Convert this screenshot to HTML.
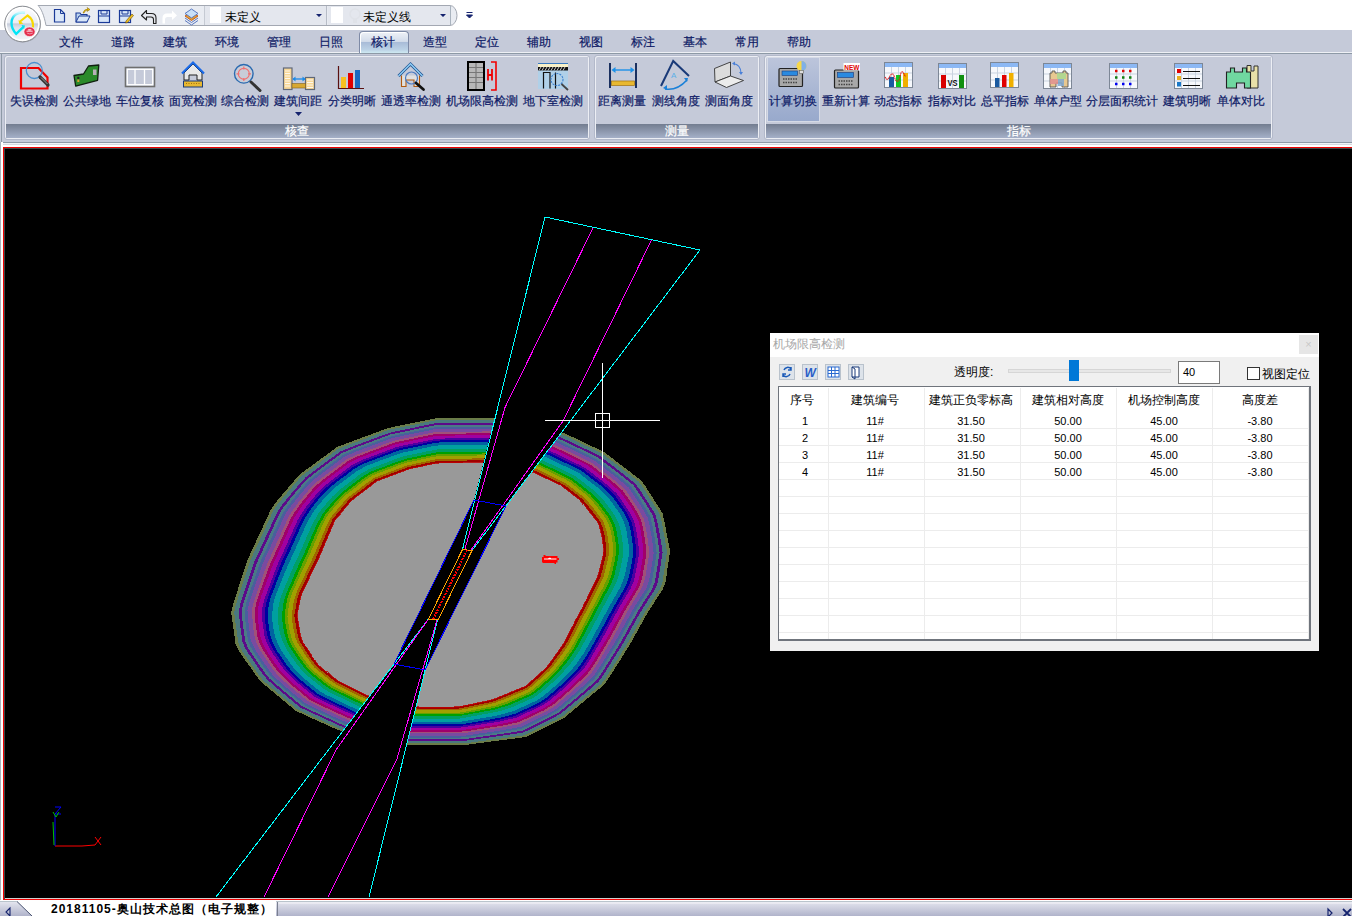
<!DOCTYPE html>
<html><head><meta charset="utf-8">
<style>
*{margin:0;padding:0;box-sizing:border-box}
html,body{width:1352px;height:916px;overflow:hidden;background:#fff;font-family:"Liberation Sans",sans-serif;font-size:12px;color:#15236e}
.a{position:absolute}
#top{left:0;top:0;width:1352px;height:30px;background:#fff}
#qat{left:36px;top:3px;width:420px;height:24px;border:1px solid #a9b0bd;border-left:none;border-radius:0 12px 12px 0;background:linear-gradient(#eef0f5,#dfe3ec)}
#menu{left:0;top:30px;width:1352px;height:22px;background:#c5cad9}
#menuline{left:0;top:52px;width:1352px;height:1px;background:#eef0f5}
#menuline2{left:0;top:53px;width:1352px;height:1px;background:#8d99a6}
#rib{left:0;top:54px;width:1352px;height:88px;background:#c5cad9}
.grp{position:absolute;top:1px;height:85px;border:1px solid #b3b9ca;border-radius:3px;background:#c5cad9;box-shadow:inset 1px 1px 0 #eceef4,inset -1px -1px 0 #eceef4}
.glab{position:absolute;left:1px;right:1px;bottom:1px;height:14px;background:linear-gradient(#737d90,#a5b0c8);color:#fff;text-align:center;font-size:12px;line-height:14px;-webkit-text-stroke:0.2px #fff}
.tx{-webkit-text-stroke:0.2px currentColor}
.btn{position:absolute;top:45px;font-size:12px;white-space:nowrap;color:#15236e;text-align:center}
.tab{position:absolute;top:35px;font-size:12px;color:#15236e}
#sep{left:0;top:142px;width:1352px;height:5px;background:linear-gradient(#8d99a6 0,#8d99a6 1px,#f0f2f6 1px,#f0f2f6 2px,#d5d9e0 2px,#d5d9e0 3px,#fff 3px)}
#canvas{left:3px;top:147px;width:1349px;height:753px;background:#000;border-top:1px solid #f00000;border-left:1px solid #f00000;border-bottom:1px solid #f00000;box-shadow:inset 1px 1px 0 #3d4848,inset 0 -1px 0 #d0d0d0}
#lstrip{left:0;top:142px;width:3px;height:760px;background:linear-gradient(90deg,#a9b2bb 0,#a9b2bb 1px,#fff 1px)}
#bot{left:0;top:900px;width:1352px;height:16px;background:linear-gradient(#fff 0,#fff 1px,#b9c4cc 1px,#b9c4cc 2px,#e3e4ee 2px,#b0b3cb 100%)}
</style></head><body>
<div id="top" class="a"></div>

<div id="menu" class="a"></div>
<div id="menuline" class="a"></div>
<div id="menuline2" class="a"></div>
<div id="rib" class="a">
 <div class="grp" style="left:4px;width:586px"><div class="glab">核查</div></div>
 <div class="grp" style="left:594px;width:166px"><div class="glab">测量</div></div>
 <div class="grp" style="left:764px;width:509px"><div class="glab">指标</div></div>
</div>
<div id="sep" class="a"></div>
<div class="a" style="left:1px;top:54px;width:1px;height:88px;background:#8d99a6"></div>
<div id="canvas" class="a"></div>
<div id="lstrip" class="a"></div>
<div id="bot" class="a"></div>
<svg class="a" style="left:0;top:900px" width="1352" height="16">
<path d="M17,1 L32,16 H276 V1z" fill="#fff"/>
<path d="M17,1.5 L32,16" stroke="#4a5470" stroke-width="1"/>
<path d="M277.5,2 V16" stroke="#7a8090" stroke-width="1"/>
<path d="M278.5,3 H1352" stroke="#f4f4f8" stroke-width="1"/>
<path d="M10,8 L6,12 L10,16z" fill="none" stroke="#15236e" stroke-width="1.1"/>
<path d="M1328,9 L1332,13 L1328,17z" fill="none" stroke="#15236e" stroke-width="1.2"/>
<path d="M1343,9 L1351,17 M1351,9 L1343,17" stroke="#15236e" stroke-width="1.8"/>
</svg>
<div class="a" style="left:51px;top:902px;font-size:12px;line-height:14px;font-weight:bold;color:#000;white-space:nowrap;letter-spacing:1px">20181105-奥山技术总图（电子规整）</div>
<svg class="a" style="left:0;top:0" width="1352" height="916" viewBox="0 0 1352 916">
<defs><clipPath id="cv"><rect x="5" y="149" width="1347" height="748"/></clipPath></defs>
<g clip-path="url(#cv)">
<g shape-rendering="crispEdges">
<polygon fill="#6a7c48" points="665.6,582.0 662.8,589.4 658.1,596.6 653.6,603.4 649.3,610.0 645.5,616.5 642.0,622.8 638.5,629.0 635.1,635.1 631.8,641.1 628.4,646.9 624.8,652.6 621.3,658.3 617.7,663.8 614.3,669.3 610.8,674.8 607.3,680.3 603.3,685.4 598.2,689.7 593.1,693.8 588.2,697.9 583.3,702.0 578.4,706.0 573.6,710.0 568.8,714.0 564.1,717.9 558.4,720.8 552.9,723.6 547.3,726.3 541.9,729.1 536.5,731.8 531.1,734.5 525.6,737.0 519.4,737.9 513.3,738.7 507.3,739.5 501.4,740.2 495.6,741.0 489.8,741.7 484.1,742.5 478.4,743.2 472.8,744.0 467.1,744.7 461.4,745.0 455.7,745.0 450.0,745.0 444.3,745.0 438.6,745.0 432.9,745.0 427.1,745.0 421.3,745.0 415.4,745.0 409.4,745.0 403.3,745.0 397.2,744.4 391.4,743.0 385.5,741.6 379.6,740.2 373.5,738.8 367.4,737.4 361.1,735.9 354.7,734.4 348.2,732.9 341.5,731.3 335.3,728.8 329.1,726.1 322.9,723.2 316.4,720.3 309.9,717.3 303.1,714.2 296.2,711.1 290.6,706.5 285.0,701.9 279.3,697.1 273.5,692.3 267.6,687.3 261.5,682.2 256.7,676.3 252.3,670.0 247.8,663.7 243.2,657.3 238.6,650.7 235.5,643.5 234.4,635.7 233.4,628.0 232.3,620.4 231.2,612.7 233.0,604.8 235.5,597.0 237.9,589.4 240.3,582.0 242.6,574.8 244.9,567.7 247.1,560.7 250.3,553.9 253.3,547.3 256.3,540.8 259.3,534.5 262.2,528.2 265.1,521.9 268.0,515.7 270.8,509.6 274.6,503.9 279.1,498.6 283.4,493.4 287.8,488.3 292.0,483.3 296.2,478.3 300.9,473.6 306.2,469.7 311.5,465.8 316.7,462.0 321.8,458.2 326.9,454.5 331.9,450.8 336.8,447.1 342.8,444.8 348.7,442.6 354.5,440.5 360.2,438.3 365.9,436.3 371.4,434.2 376.9,432.1 382.4,430.1 387.8,428.1 393.5,426.9 399.2,425.7 404.9,424.6 410.5,423.4 416.0,422.3 421.6,421.1 427.2,420.0 432.9,418.8 438.5,418.0 444.3,418.0 450.0,418.0 455.7,418.0 461.5,418.0 467.2,418.0 473.0,418.0 478.9,418.0 484.9,418.0 490.9,418.0 497.0,418.0 503.1,418.7 509.0,420.0 514.9,421.4 520.9,422.7 527.0,424.1 533.2,425.5 539.5,426.9 546.0,428.4 552.6,429.9 559.4,431.4 565.8,433.8 571.9,436.7 578.1,439.7 584.5,442.7 591.0,445.8 597.7,449.0 604.5,452.4 610.3,456.8 616.2,461.3 622.2,465.9 628.3,470.6 634.7,475.4 641.2,480.4 645.6,486.6 649.7,493.1 653.9,499.6 658.1,506.3 662.4,513.0 664.2,520.6 665.7,528.2 667.1,535.8 668.6,543.5 670.0,551.1 668.9,559.0 667.7,566.8 666.7,574.4"/>
<polygon fill="#4a7a7e" points="662.5,582.0 659.7,589.3 655.1,596.3 650.8,603.1 646.5,609.6 642.8,616.0 639.3,622.2 635.9,628.4 632.6,634.3 629.3,640.2 626.0,646.0 622.4,651.7 619.0,657.2 615.5,662.7 612.1,668.2 608.7,673.6 605.2,679.0 601.3,684.0 596.2,688.3 591.3,692.4 586.5,696.5 581.6,700.5 576.9,704.5 572.1,708.5 567.4,712.4 562.7,716.3 557.2,719.2 551.7,721.9 546.2,724.7 540.8,727.3 535.5,730.0 530.1,732.7 524.7,735.2 518.6,736.1 512.6,736.9 506.7,737.7 500.9,738.5 495.1,739.3 489.4,740.0 483.8,740.8 478.1,741.5 472.5,742.3 466.9,743.0 461.3,743.3 455.6,743.3 450.0,743.3 444.4,743.3 438.7,743.3 433.0,743.3 427.3,743.3 421.6,743.3 415.7,743.3 409.8,743.3 403.7,743.3 397.8,742.7 392.0,741.3 386.2,740.0 380.3,738.6 374.3,737.2 368.2,735.8 362.1,734.3 355.7,732.9 349.3,731.4 342.6,729.8 336.5,727.3 330.4,724.5 324.2,721.7 317.9,718.8 311.4,715.9 304.7,712.8 297.9,709.7 292.4,705.2 286.8,700.5 281.2,695.9 275.5,691.1 269.6,686.1 263.7,681.1 258.9,675.2 254.6,669.0 250.2,662.7 245.7,656.3 241.3,649.8 238.3,642.7 237.2,635.1 236.1,627.5 235.2,619.9 234.2,612.3 235.9,604.5 238.4,596.8 240.8,589.3 243.2,582.0 245.5,574.9 247.8,567.9 250.1,561.0 253.1,554.3 256.2,547.8 259.1,541.4 262.0,535.1 264.9,528.9 267.7,522.8 270.5,516.7 273.3,510.6 277.1,505.0 281.4,499.8 285.7,494.6 289.9,489.6 294.1,484.6 298.3,479.7 302.8,475.1 308.1,471.1 313.3,467.3 318.4,463.5 323.4,459.8 328.4,456.1 333.4,452.5 338.3,448.8 344.2,446.5 350.0,444.3 355.7,442.2 361.3,440.1 366.9,438.0 372.3,436.0 377.8,433.9 383.2,431.9 388.6,429.9 394.2,428.7 399.8,427.6 405.4,426.4 410.9,425.3 416.4,424.2 422.0,423.0 427.5,421.9 433.1,420.8 438.7,420.0 444.3,419.9 450.0,419.9 455.7,419.9 461.3,419.9 467.0,419.9 472.8,419.9 478.6,419.9 484.5,419.9 490.4,419.9 496.5,419.9 502.4,420.6 508.3,421.9 514.1,423.2 520.1,424.6 526.1,425.9 532.2,427.3 538.5,428.7 544.9,430.2 551.4,431.6 558.1,433.2 564.5,435.5 570.5,438.4 576.7,441.3 583.0,444.3 589.4,447.4 596.0,450.5 602.7,453.9 608.4,458.2 614.2,462.7 620.2,467.2 626.2,471.9 632.4,476.7 638.8,481.6 643.2,487.8 647.3,494.2 651.4,500.6 655.5,507.2 659.7,513.9 661.5,521.3 663.0,528.9 664.4,536.4 665.7,544.0 667.0,551.5 665.9,559.3 664.8,567.0 663.6,574.5"/>
<polygon fill="#5c0a8a" points="657.9,582.0 655.1,589.2 650.7,596.0 646.5,602.6 642.4,609.0 638.7,615.3 635.3,621.4 632.0,627.4 628.7,633.3 625.5,639.0 622.3,644.7 618.9,650.2 615.5,655.7 612.1,661.1 608.8,666.4 605.4,671.7 602.1,677.0 598.2,682.0 593.4,686.2 588.6,690.3 583.9,694.3 579.2,698.3 574.5,702.2 569.9,706.1 565.2,710.0 560.6,713.8 555.2,716.7 549.9,719.5 544.5,722.1 539.2,724.8 533.9,727.4 528.7,730.0 523.4,732.4 517.4,733.4 511.5,734.2 505.7,735.1 500.0,735.9 494.4,736.7 488.8,737.5 483.2,738.2 477.7,739.0 472.2,739.8 466.7,740.5 461.1,740.9 455.5,740.9 450.0,740.9 444.5,740.9 438.9,740.9 433.3,740.9 427.7,740.9 422.0,740.9 416.2,740.9 410.4,740.9 404.5,740.8 398.6,740.1 392.9,738.8 387.2,737.5 381.4,736.1 375.5,734.7 369.5,733.4 363.4,731.9 357.2,730.5 350.8,729.0 344.3,727.5 338.3,725.0 332.3,722.3 326.2,719.5 320.0,716.6 313.6,713.7 307.1,710.7 300.4,707.5 295.0,703.1 289.5,698.6 284.0,694.0 278.3,689.3 272.7,684.4 267.0,679.3 262.3,673.5 258.1,667.5 253.8,661.3 249.5,655.0 245.2,648.5 242.4,641.5 241.3,634.0 240.3,626.6 239.5,619.1 238.6,611.7 240.3,604.0 242.7,596.5 245.2,589.2 247.6,582.0 249.9,575.0 252.2,568.2 254.4,561.4 257.5,554.9 260.4,548.6 263.3,542.3 266.1,536.2 268.9,530.1 271.7,524.1 274.4,518.1 277.2,512.2 280.8,506.6 284.9,501.5 289.0,496.4 293.2,491.4 297.3,486.6 301.4,481.7 305.8,477.2 310.9,473.3 315.9,469.5 320.9,465.8 325.9,462.1 330.8,458.5 335.6,455.0 340.4,451.4 346.1,449.1 351.8,446.8 357.4,444.7 362.9,442.7 368.4,440.6 373.8,438.6 379.1,436.6 384.4,434.7 389.7,432.7 395.2,431.5 400.7,430.3 406.2,429.2 411.6,428.1 417.0,427.0 422.5,425.9 427.9,424.8 433.4,423.6 438.9,422.9 444.4,422.9 450.0,422.9 455.6,422.9 461.1,422.8 466.7,422.8 472.4,422.8 478.1,422.8 483.8,422.8 489.7,422.8 495.7,422.8 501.5,423.4 507.2,424.7 513.0,426.0 518.9,427.3 524.8,428.7 530.8,430.0 536.9,431.4 543.2,432.8 549.6,434.3 556.2,435.8 562.5,438.1 568.4,440.9 574.4,443.8 580.6,446.7 587.0,449.7 593.4,452.8 600.0,456.1 605.6,460.4 611.3,464.8 617.2,469.3 623.1,473.8 629.1,478.6 635.3,483.5 639.6,489.5 643.7,495.8 647.8,502.1 651.8,508.6 655.7,515.2 657.5,522.5 658.9,529.9 660.2,537.3 661.5,544.7 662.6,552.1 661.4,559.8 660.3,567.3 659.1,574.7"/>
<polygon fill="#4a7a86" points="654.8,582.0 652.1,589.1 647.8,595.8 643.6,602.3 639.6,608.6 636.0,614.8 632.7,620.8 629.4,626.7 626.2,632.5 623.0,638.2 619.9,643.8 616.5,649.3 613.2,654.7 609.9,660.0 606.6,665.3 603.3,670.5 600.0,675.7 596.2,680.6 591.4,684.8 586.8,688.8 582.2,692.9 577.6,696.9 572.9,700.7 568.4,704.6 563.8,708.4 559.3,712.2 554.0,715.1 548.7,717.9 543.4,720.5 538.1,723.1 532.9,725.6 527.7,728.2 522.5,730.6 516.6,731.5 510.8,732.5 505.1,733.4 499.5,734.2 493.9,735.0 488.3,735.8 482.8,736.5 477.4,737.3 471.9,738.1 466.5,738.8 461.0,739.2 455.5,739.2 450.0,739.2 444.5,739.2 439.0,739.2 433.5,739.2 427.9,739.2 422.3,739.2 416.6,739.2 410.8,739.2 404.9,739.1 399.2,738.4 393.5,737.1 387.9,735.8 382.1,734.5 376.3,733.1 370.4,731.7 364.4,730.3 358.2,728.9 351.9,727.4 345.4,725.9 339.5,723.5 333.6,720.8 327.6,718.0 321.4,715.2 315.1,712.3 308.6,709.3 302.1,706.1 296.7,701.8 291.3,697.3 285.8,692.7 280.3,688.1 274.8,683.2 269.1,678.2 264.6,672.4 260.4,666.4 256.1,660.3 252.0,654.1 247.9,647.7 245.1,640.7 244.1,633.3 243.1,626.0 242.3,618.6 241.6,611.3 243.2,603.7 245.6,596.3 248.1,589.1 250.5,582.0 252.8,575.1 255.1,568.4 257.4,561.8 260.3,555.3 263.2,549.1 266.1,542.9 268.9,536.8 271.6,530.8 274.3,524.9 277.0,519.0 279.7,513.2 283.2,507.7 287.3,502.6 291.2,497.6 295.3,492.7 299.4,487.9 303.4,483.1 307.8,478.7 312.8,474.8 317.7,471.0 322.7,467.3 327.5,463.7 332.3,460.2 337.1,456.6 341.9,453.1 347.5,450.8 353.0,448.5 358.5,446.4 364.0,444.4 369.4,442.4 374.7,440.4 380.0,438.4 385.2,436.5 390.4,434.5 395.9,433.3 401.3,432.2 406.7,431.1 412.1,430.0 417.4,428.9 422.8,427.8 428.2,426.7 433.6,425.6 439.0,424.8 444.5,424.8 450.0,424.8 455.5,424.8 461.0,424.8 466.5,424.8 472.1,424.8 477.7,424.7 483.4,424.7 489.2,424.7 495.1,424.7 500.9,425.3 506.6,426.6 512.3,427.9 518.0,429.2 523.9,430.5 529.8,431.8 535.9,433.2 542.1,434.6 548.5,436.0 555.0,437.5 561.1,439.8 567.0,442.6 573.0,445.4 579.1,448.3 585.3,451.3 591.7,454.4 598.2,457.6 603.7,461.9 609.4,466.2 615.1,470.6 621.0,475.1 626.9,479.9 633.0,484.7 637.2,490.7 641.2,496.9 645.3,503.1 649.2,509.5 653.1,516.0 654.8,523.3 656.1,530.6 657.5,537.9 658.6,545.2 659.6,552.5 658.4,560.1 657.3,567.5 656.1,574.8"/>
<polygon fill="#4a5e9e" points="651.8,582.0 649.0,588.9 644.8,595.6 640.7,602.0 636.8,608.3 633.3,614.3 630.0,620.3 626.8,626.1 623.7,631.8 620.6,637.4 617.5,642.9 614.2,648.3 610.9,653.6 607.7,658.9 604.5,664.1 601.2,669.3 597.9,674.4 594.1,679.2 589.5,683.3 584.9,687.4 580.4,691.4 575.9,695.4 571.4,699.2 566.9,703.0 562.4,706.8 557.9,710.6 552.7,713.4 547.5,716.2 542.3,718.8 537.1,721.3 531.9,723.9 526.8,726.4 521.6,728.8 515.8,729.7 510.1,730.7 504.5,731.7 498.9,732.5 493.4,733.3 487.9,734.1 482.5,734.8 477.1,735.6 471.7,736.4 466.3,737.1 460.9,737.5 455.4,737.6 450.0,737.6 444.6,737.6 439.1,737.6 433.6,737.6 428.1,737.6 422.6,737.6 416.9,737.6 411.2,737.6 405.4,737.4 399.7,736.7 394.2,735.4 388.5,734.1 382.8,732.8 377.1,731.5 371.2,730.1 365.3,728.7 359.2,727.3 352.9,725.9 346.6,724.4 340.7,721.9 334.8,719.2 328.9,716.5 322.8,713.7 316.6,710.8 310.2,707.9 303.8,704.7 298.5,700.4 293.1,696.0 287.7,691.5 282.2,686.9 276.8,682.0 271.3,677.0 266.9,671.3 262.7,665.4 258.5,659.4 254.5,653.2 250.5,646.8 247.9,640.0 246.8,632.7 245.8,625.4 245.2,618.1 244.6,610.9 246.2,603.4 248.6,596.1 251.0,588.9 253.4,582.0 255.7,575.2 258.0,568.6 260.3,562.1 263.2,555.7 266.1,549.6 268.9,543.5 271.6,537.5 274.3,531.6 277.0,525.8 279.6,520.0 282.3,514.2 285.7,508.8 289.6,503.8 293.5,498.8 297.5,493.9 301.5,489.2 305.5,484.5 309.7,480.1 314.6,476.2 319.5,472.5 324.4,468.9 329.2,465.3 333.9,461.8 338.6,458.3 343.3,454.8 348.8,452.5 354.2,450.2 359.7,448.1 365.1,446.1 370.4,444.1 375.6,442.2 380.9,440.2 386.0,438.3 391.2,436.4 396.5,435.1 401.9,434.0 407.3,432.9 412.6,431.8 417.8,430.7 423.1,429.6 428.4,428.6 433.8,427.5 439.1,426.8 444.6,426.8 450.0,426.8 455.4,426.7 460.9,426.7 466.3,426.7 471.8,426.7 477.4,426.7 483.0,426.7 488.7,426.6 494.6,426.6 500.3,427.2 505.9,428.5 511.5,429.8 517.2,431.0 523.0,432.3 528.9,433.7 534.9,435.0 541.0,436.4 547.3,437.8 553.7,439.2 559.8,441.5 565.6,444.2 571.5,447.1 577.5,449.9 583.7,452.9 590.0,455.9 596.4,459.1 601.9,463.3 607.4,467.6 613.1,472.0 619.0,476.4 624.7,481.1 630.6,486.0 634.8,491.9 638.8,497.9 642.9,504.1 646.7,510.4 650.4,516.9 652.1,524.0 653.4,531.3 654.7,538.5 655.8,545.7 656.7,553.0 655.5,560.4 654.3,567.7 653.1,574.9"/>
<polygon fill="#7a4aa0" points="648.7,582.0 646.0,588.8 641.8,595.4 637.9,601.7 634.0,607.9 630.6,613.8 627.4,619.7 624.2,625.4 621.1,631.1 618.1,636.6 615.0,642.1 611.8,647.4 608.6,652.6 605.4,657.8 602.3,663.0 599.0,668.0 595.8,673.1 592.1,677.8 587.6,681.9 583.1,686.0 578.7,690.0 574.3,693.9 569.8,697.7 565.4,701.5 560.9,705.2 556.5,708.9 551.4,711.8 546.4,714.6 541.1,717.1 536.0,719.6 530.9,722.1 525.8,724.5 520.7,726.9 515.0,727.9 509.4,728.9 503.8,729.9 498.3,730.8 492.9,731.6 487.5,732.4 482.1,733.1 476.8,733.9 471.5,734.7 466.1,735.5 460.8,735.9 455.4,735.9 450.0,735.9 444.6,735.9 439.2,735.9 433.8,735.9 428.4,735.9 422.9,735.9 417.3,735.9 411.6,735.9 405.9,735.8 400.3,735.0 394.8,733.8 389.2,732.5 383.6,731.2 377.9,729.9 372.1,728.5 366.2,727.2 360.2,725.8 354.0,724.3 347.7,722.8 341.9,720.4 336.1,717.7 330.2,715.0 324.2,712.2 318.1,709.4 311.8,706.4 305.4,703.3 300.2,699.0 294.9,694.7 289.6,690.2 284.1,685.7 278.9,680.8 273.5,675.8 269.1,670.2 265.0,664.3 260.9,658.4 256.9,652.3 253.2,645.9 250.6,639.2 249.6,632.0 248.6,624.8 248.1,617.6 247.5,610.5 249.1,603.1 251.5,595.9 253.9,588.8 256.3,582.0 258.6,575.3 260.9,568.8 263.2,562.4 266.1,556.2 268.9,550.1 271.6,544.1 274.3,538.2 277.0,532.4 279.6,526.6 282.2,520.9 284.8,515.3 288.1,509.9 291.9,504.9 295.7,500.0 299.6,495.2 303.6,490.5 307.5,485.9 311.7,481.5 316.5,477.7 321.3,474.0 326.1,470.4 330.8,466.9 335.5,463.4 340.1,460.0 344.7,456.5 350.1,454.2 355.4,451.8 360.8,449.8 366.2,447.8 371.4,445.9 376.6,443.9 381.7,442.0 386.8,440.1 391.9,438.2 397.2,437.0 402.5,435.9 407.8,434.8 413.0,433.7 418.2,432.6 423.5,431.5 428.7,430.5 434.0,429.4 439.3,428.7 444.6,428.7 450.0,428.7 455.4,428.7 460.7,428.7 466.1,428.6 471.6,428.6 477.0,428.6 482.6,428.6 488.3,428.6 494.0,428.5 499.7,429.1 505.2,430.4 510.8,431.6 516.4,432.9 522.1,434.2 527.9,435.5 533.8,436.8 539.9,438.2 546.1,439.6 552.5,441.0 558.5,443.2 564.2,445.9 570.0,448.7 576.0,451.5 582.1,454.5 588.3,457.4 594.6,460.6 600.0,464.8 605.5,469.0 611.1,473.3 616.9,477.7 622.5,482.4 628.3,487.2 632.4,493.0 636.4,499.0 640.4,505.1 644.2,511.3 647.7,517.8 649.4,524.8 650.7,532.0 652.0,539.1 653.0,546.2 653.7,553.4 652.5,560.7 651.3,567.9 650.1,575.0"/>
<polygon fill="#a05078" points="644.1,582.0 641.4,588.7 637.4,595.1 633.6,601.3 629.9,607.3 626.5,613.1 623.4,618.9 620.3,624.5 617.3,630.0 614.3,635.4 611.4,640.7 608.2,645.9 605.1,651.1 602.1,656.2 599.0,661.2 595.8,666.2 592.6,671.1 589.0,675.8 584.7,679.8 580.4,683.9 576.1,687.8 571.8,691.7 567.5,695.4 563.1,699.1 558.8,702.8 554.4,706.5 549.5,709.4 544.6,712.2 539.5,714.6 534.4,717.0 529.4,719.5 524.4,721.8 519.3,724.2 513.8,725.2 508.3,726.3 502.9,727.3 497.5,728.2 492.2,729.0 486.8,729.8 481.6,730.6 476.3,731.4 471.1,732.1 465.9,732.9 460.6,733.4 455.3,733.4 450.0,733.4 444.7,733.4 439.4,733.4 434.1,733.4 428.7,733.4 423.3,733.4 417.8,733.4 412.2,733.4 406.6,733.3 401.1,732.5 395.7,731.3 390.2,730.0 384.7,728.7 379.1,727.4 373.4,726.1 367.6,724.8 361.7,723.4 355.6,722.0 349.4,720.5 343.7,718.1 338.0,715.4 332.3,712.8 326.4,710.0 320.3,707.2 314.1,704.3 308.0,701.2 302.8,697.0 297.6,692.7 292.3,688.3 287.0,683.9 281.9,679.0 276.8,674.1 272.5,668.6 268.5,662.8 264.5,657.0 260.7,650.9 257.2,644.7 254.8,638.0 253.7,630.9 252.8,623.9 252.4,616.8 252.0,609.8 253.5,602.7 255.8,595.6 258.3,588.7 260.7,582.0 263.0,575.5 265.3,569.1 267.6,562.8 270.4,556.8 273.2,550.8 275.8,545.0 278.4,539.2 281.0,533.5 283.6,527.9 286.1,522.3 288.6,516.8 291.8,511.6 295.5,506.6 299.0,501.7 302.9,497.1 306.8,492.5 310.6,488.0 314.7,483.7 319.3,479.9 323.9,476.2 328.6,472.7 333.2,469.3 337.8,465.8 342.4,462.5 346.9,459.1 352.1,456.7 357.3,454.4 362.6,452.4 367.8,450.4 372.9,448.5 378.0,446.6 383.0,444.7 388.0,442.8 393.0,441.0 398.2,439.7 403.4,438.6 408.6,437.6 413.7,436.5 418.8,435.4 424.0,434.4 429.1,433.3 434.3,432.3 439.5,431.7 444.7,431.6 450.0,431.6 455.3,431.6 460.5,431.6 465.8,431.5 471.1,431.5 476.5,431.5 482.0,431.5 487.5,431.4 493.2,431.4 498.7,432.0 504.2,433.2 509.6,434.4 515.2,435.7 520.8,436.9 526.5,438.2 532.3,439.5 538.2,440.8 544.3,442.2 550.6,443.6 556.5,445.7 562.1,448.4 567.8,451.2 573.7,454.0 579.6,456.8 585.8,459.7 591.9,462.9 597.2,467.0 602.6,471.1 608.1,475.4 613.7,479.7 619.2,484.3 624.8,489.1 628.9,494.8 632.8,500.6 636.8,506.5 640.4,512.7 643.8,519.0 645.4,526.0 646.6,533.0 647.8,540.0 648.7,547.0 649.2,554.0 648.0,561.2 646.9,568.2 645.6,575.2"/>
<polygon fill="#a0006a" points="641.0,582.0 638.3,588.6 634.4,594.9 630.7,601.0 627.1,606.9 623.8,612.7 620.7,618.3 617.7,623.8 614.8,629.2 611.8,634.6 608.9,639.8 605.9,645.0 602.8,650.0 599.8,655.1 596.8,660.1 593.7,664.9 590.5,669.8 587.0,674.4 582.7,678.4 578.6,682.4 574.4,686.4 570.2,690.2 565.9,693.9 561.6,697.6 557.3,701.2 553.1,704.8 548.2,707.7 543.4,710.6 538.3,713.0 533.3,715.3 528.3,717.7 523.4,720.0 518.4,722.3 513.0,723.4 507.6,724.5 502.3,725.6 496.9,726.5 491.7,727.3 486.4,728.1 481.2,728.9 476.0,729.7 470.9,730.5 465.7,731.2 460.5,731.7 455.2,731.8 450.0,731.8 444.8,731.8 439.5,731.8 434.3,731.8 428.9,731.8 423.6,731.8 418.2,731.8 412.7,731.8 407.1,731.6 401.6,730.8 396.3,729.6 390.9,728.3 385.4,727.1 379.9,725.8 374.2,724.5 368.5,723.2 362.6,721.8 356.6,720.4 350.5,718.9 344.9,716.5 339.3,713.9 333.6,711.3 327.8,708.6 321.8,705.8 315.7,702.9 309.7,699.8 304.6,695.6 299.4,691.4 294.2,687.1 288.9,682.7 284.0,677.8 279.0,672.9 274.8,667.5 270.9,661.8 266.9,656.0 263.2,650.0 259.8,643.8 257.5,637.2 256.5,630.2 255.5,623.3 255.2,616.3 254.9,609.4 256.5,602.3 258.7,595.4 261.2,588.6 263.6,582.0 265.9,575.6 268.2,569.3 270.5,563.1 273.3,557.2 276.0,551.3 278.6,545.6 281.2,539.9 283.7,534.3 286.2,528.8 288.7,523.3 291.2,517.8 294.3,512.7 297.8,507.8 301.3,502.9 305.1,498.3 308.9,493.8 312.6,489.3 316.6,485.1 321.2,481.3 325.7,477.7 330.3,474.2 334.9,470.8 339.4,467.5 343.9,464.1 348.3,460.8 353.4,458.4 358.5,456.0 363.7,454.1 368.9,452.1 373.9,450.2 378.9,448.4 383.9,446.5 388.9,444.7 393.8,442.8 398.9,441.5 404.0,440.5 409.1,439.4 414.2,438.4 419.2,437.3 424.3,436.3 429.4,435.2 434.5,434.2 439.6,433.6 444.8,433.6 450.0,433.6 455.2,433.5 460.4,433.5 465.6,433.5 470.9,433.4 476.2,433.4 481.6,433.4 487.1,433.4 492.6,433.3 498.1,433.9 503.5,435.1 508.9,436.3 514.3,437.5 519.9,438.8 525.5,440.0 531.2,441.3 537.1,442.6 543.1,443.9 549.3,445.3 555.1,447.4 560.7,450.1 566.3,452.8 572.1,455.6 578.0,458.4 584.1,461.3 590.1,464.4 595.4,468.4 600.7,472.5 606.1,476.7 611.7,481.0 617.0,485.6 622.4,490.3 626.5,495.9 630.4,501.7 634.3,507.5 637.8,513.6 641.1,519.9 642.7,526.7 643.9,533.7 645.1,540.5 645.9,547.5 646.3,554.4 645.1,561.5 643.9,568.4 642.6,575.3"/>
<polygon fill="#a000a0" points="638.0,582.0 635.3,588.5 631.5,594.7 627.9,600.7 624.3,606.5 621.1,612.2 618.1,617.7 615.1,623.2 612.2,628.5 609.4,633.8 606.5,639.0 603.5,644.0 600.5,649.0 597.6,654.0 594.7,658.9 591.5,663.7 588.4,668.5 584.9,673.0 580.8,677.0 576.7,681.0 572.7,685.0 568.6,688.8 564.3,692.4 560.1,696.0 555.9,699.6 551.7,703.2 546.9,706.1 542.2,708.9 537.2,711.3 532.2,713.6 527.3,715.9 522.4,718.2 517.5,720.5 512.2,721.6 506.9,722.8 501.6,723.9 496.4,724.8 491.2,725.6 486.0,726.4 480.9,727.2 475.7,728.0 470.6,728.8 465.5,729.6 460.4,730.1 455.2,730.1 450.0,730.1 444.8,730.1 439.6,730.1 434.4,730.1 429.2,730.1 423.9,730.1 418.5,730.1 413.1,730.1 407.6,729.9 402.2,729.1 396.9,727.9 391.6,726.7 386.1,725.4 380.7,724.2 375.1,722.9 369.4,721.6 363.6,720.2 357.7,718.9 351.6,717.4 346.1,715.0 340.6,712.4 335.0,709.8 329.2,707.1 323.3,704.3 317.3,701.5 311.3,698.3 306.3,694.3 301.2,690.1 296.1,685.8 290.8,681.5 286.0,676.7 281.2,671.8 277.1,666.3 273.2,660.7 269.3,655.0 265.7,649.1 262.5,642.9 260.3,636.4 259.2,629.6 258.3,622.7 258.1,615.8 257.9,609.0 259.4,602.0 261.6,595.2 264.1,588.5 266.5,582.0 268.9,575.7 271.1,569.5 273.4,563.4 276.2,557.6 278.8,551.8 281.4,546.2 283.9,540.6 286.4,535.1 288.8,529.6 291.3,524.2 293.7,518.9 296.7,513.8 300.1,508.9 303.5,504.1 307.2,499.6 311.0,495.1 314.7,490.7 318.6,486.5 323.0,482.8 327.5,479.2 332.0,475.8 336.5,472.4 341.0,469.1 345.4,465.8 349.8,462.5 354.8,460.1 359.7,457.7 364.8,455.8 369.9,453.9 374.9,452.0 379.9,450.1 384.8,448.3 389.7,446.5 394.5,444.7 399.5,443.4 404.6,442.3 409.6,441.3 414.7,440.2 419.6,439.2 424.6,438.2 429.6,437.1 434.7,436.1 439.8,435.6 444.9,435.5 450.0,435.5 455.1,435.5 460.2,435.4 465.4,435.4 470.6,435.4 475.9,435.3 481.2,435.3 486.6,435.3 492.1,435.2 497.5,435.8 502.8,437.0 508.1,438.2 513.5,439.4 519.0,440.6 524.5,441.8 530.2,443.1 536.0,444.4 541.9,445.7 548.0,447.1 553.8,449.2 559.3,451.8 564.9,454.4 570.5,457.2 576.4,460.0 582.4,462.8 588.3,465.9 593.5,469.9 598.7,473.9 604.1,478.1 609.6,482.3 614.8,486.9 620.1,491.6 624.1,497.1 628.0,502.8 631.9,508.5 635.3,514.6 638.4,520.8 640.0,527.5 641.2,534.3 642.3,541.1 643.0,548.0 643.3,554.8 642.1,561.8 640.9,568.7 639.6,575.4"/>
<polygon fill="#4a00a0" points="633.4,582.0 630.7,588.3 627.1,594.4 623.6,600.2 620.2,605.9 617.1,611.5 614.1,616.9 611.2,622.2 608.4,627.4 605.6,632.6 602.8,637.6 599.9,642.6 597.1,647.5 594.2,652.3 591.4,657.2 588.3,661.9 585.3,666.5 581.9,671.0 577.9,674.9 574.0,678.9 570.1,682.8 566.1,686.6 562.0,690.1 557.8,693.7 553.7,697.2 549.6,700.7 545.0,703.6 540.4,706.5 535.5,708.8 530.6,711.0 525.8,713.3 521.0,715.5 516.2,717.7 511.0,718.9 505.8,720.1 500.7,721.3 495.5,722.2 490.4,723.0 485.4,723.8 480.3,724.6 475.3,725.4 470.3,726.2 465.2,727.0 460.2,727.6 455.1,727.7 450.0,727.7 444.9,727.7 439.8,727.7 434.7,727.7 429.5,727.7 424.3,727.7 419.0,727.7 413.7,727.7 408.3,727.4 403.0,726.6 397.8,725.4 392.6,724.2 387.2,722.9 381.9,721.7 376.4,720.5 370.8,719.2 365.1,717.9 359.3,716.5 353.3,715.1 347.9,712.7 342.5,710.1 337.0,707.5 331.3,704.9 325.6,702.2 319.7,699.4 313.9,696.2 308.9,692.2 303.9,688.1 298.9,683.9 293.7,679.7 289.1,674.9 284.4,670.0 280.5,664.7 276.7,659.2 272.8,653.6 269.4,647.7 266.5,641.6 264.4,635.2 263.4,628.5 262.5,621.9 262.4,615.1 262.3,608.4 263.8,601.6 266.0,594.9 268.5,588.3 270.9,582.0 273.2,575.8 275.5,569.8 277.8,563.9 280.5,558.2 283.1,552.6 285.6,547.0 288.0,541.6 290.4,536.2 292.8,530.9 295.2,525.6 297.5,520.4 300.4,515.4 303.6,510.6 306.8,505.9 310.5,501.4 314.1,497.1 317.7,492.8 321.6,488.7 325.8,485.0 330.1,481.4 334.6,478.1 339.0,474.8 343.3,471.5 347.6,468.3 351.9,465.1 356.7,462.6 361.5,460.2 366.6,458.3 371.5,456.4 376.5,454.6 381.3,452.8 386.1,451.0 390.9,449.2 395.6,447.4 400.5,446.1 405.5,445.1 410.4,444.1 415.4,443.0 420.2,442.0 425.1,441.0 430.0,440.0 435.0,439.0 440.0,438.5 445.0,438.5 450.0,438.4 455.0,438.4 460.0,438.3 465.1,438.3 470.2,438.3 475.4,438.2 480.6,438.2 485.9,438.2 491.3,438.1 496.6,438.6 501.8,439.8 507.0,441.0 512.3,442.1 517.6,443.3 523.1,444.5 528.6,445.8 534.3,447.0 540.2,448.3 546.1,449.7 551.8,451.7 557.2,454.3 562.6,456.9 568.2,459.6 573.9,462.3 579.8,465.1 585.7,468.2 590.7,472.1 595.8,476.0 601.1,480.1 606.4,484.2 611.5,488.8 616.6,493.4 620.5,498.8 624.3,504.4 628.2,510.0 631.5,515.9 634.4,522.1 636.0,528.7 637.1,535.4 638.2,542.0 638.8,548.7 638.9,555.5 637.6,562.3 636.4,569.0 635.1,575.5"/>
<polygon fill="#0000a0" points="630.3,582.0 627.6,588.2 624.1,594.2 620.7,599.9 617.4,605.5 614.3,611.0 611.5,616.3 608.6,621.6 605.9,626.7 603.1,631.8 600.4,636.7 597.6,641.6 594.8,646.5 592.0,651.2 589.2,656.0 586.2,660.6 583.2,665.2 579.8,669.6 576.0,673.5 572.2,677.5 568.4,681.3 564.5,685.1 560.4,688.6 556.3,692.1 552.3,695.6 548.2,699.1 543.8,702.0 539.3,704.9 534.4,707.1 529.6,709.3 524.8,711.5 520.0,713.7 515.3,715.9 510.2,717.1 505.1,718.3 500.1,719.6 495.0,720.5 489.9,721.3 484.9,722.1 480.0,722.9 475.0,723.7 470.0,724.5 465.1,725.3 460.1,725.9 455.0,726.0 450.0,726.0 445.0,726.0 439.9,726.0 434.9,726.0 429.8,726.0 424.6,726.0 419.4,726.0 414.1,726.0 408.8,725.7 403.6,724.9 398.4,723.7 393.2,722.5 388.0,721.3 382.7,720.1 377.2,718.8 371.7,717.6 366.1,716.3 360.3,715.0 354.4,713.5 349.1,711.2 343.8,708.6 338.3,706.0 332.8,703.4 327.1,700.7 321.2,698.0 315.6,694.8 310.7,690.9 305.7,686.8 300.7,682.7 295.6,678.5 291.2,673.7 286.6,668.9 282.7,663.6 279.0,658.1 275.2,652.6 271.9,646.8 269.1,640.8 267.1,634.4 266.1,627.8 265.2,621.3 265.3,614.6 265.3,608.0 266.7,601.3 268.9,594.7 271.4,588.2 273.8,582.0 276.1,575.9 278.4,570.0 280.7,564.2 283.4,558.6 285.9,553.1 288.3,547.6 290.7,542.3 293.1,537.0 295.4,531.8 297.8,526.6 300.1,521.4 302.9,516.5 306.0,511.8 309.1,507.1 312.6,502.7 316.2,498.4 319.8,494.2 323.6,490.1 327.7,486.4 331.9,482.9 336.3,479.6 340.6,476.4 344.9,473.2 349.1,470.0 353.3,466.8 358.1,464.3 362.7,461.9 367.7,460.0 372.6,458.2 377.5,456.4 382.2,454.6 387.0,452.8 391.7,451.0 396.4,449.3 401.2,448.0 406.1,446.9 411.0,445.9 415.8,444.9 420.6,443.9 425.5,442.9 430.3,441.9 435.2,440.9 440.1,440.5 445.1,440.4 450.0,440.4 454.9,440.3 459.9,440.3 464.9,440.2 469.9,440.2 475.0,440.2 480.2,440.1 485.4,440.1 490.7,440.0 496.0,440.5 501.1,441.7 506.2,442.8 511.4,444.0 516.7,445.2 522.1,446.4 527.6,447.6 533.2,448.8 539.0,450.1 544.9,451.4 550.5,453.4 555.8,456.0 561.2,458.5 566.7,461.2 572.3,463.9 578.1,466.7 583.9,469.7 588.8,473.5 593.9,477.4 599.1,481.4 604.4,485.5 609.3,490.0 614.2,494.7 618.1,500.0 621.9,505.5 625.8,511.0 629.0,516.9 631.8,522.9 633.3,529.4 634.3,536.0 635.4,542.6 635.9,549.2 635.9,555.9 634.7,562.6 633.4,569.2 632.1,575.6"/>
<polygon fill="#0064a0" points="627.2,582.0 624.6,588.1 621.1,594.0 617.8,599.6 614.6,605.1 611.6,610.5 608.8,615.8 606.0,620.9 603.3,626.0 600.6,630.9 598.0,635.9 595.2,640.7 592.5,645.4 589.7,650.2 587.0,654.9 584.0,659.4 581.0,663.9 577.8,668.2 574.1,672.1 570.3,676.0 566.7,679.9 562.9,683.6 558.8,687.1 554.8,690.6 550.8,694.0 546.9,697.4 542.5,700.4 538.1,703.2 533.3,705.4 528.5,707.6 523.8,709.8 519.1,711.9 514.4,714.0 509.3,715.3 504.4,716.6 499.4,717.8 494.4,718.7 489.4,719.6 484.5,720.4 479.6,721.2 474.7,722.0 469.8,722.8 464.9,723.7 459.9,724.3 455.0,724.3 450.0,724.3 445.0,724.3 440.0,724.3 435.0,724.3 430.0,724.3 424.9,724.3 419.7,724.3 414.5,724.3 409.3,724.0 404.1,723.2 399.0,722.0 393.9,720.8 388.7,719.7 383.4,718.5 378.1,717.2 372.6,716.0 367.1,714.7 361.4,713.4 355.6,712.0 350.3,709.6 345.0,707.1 339.7,704.6 334.2,701.9 328.6,699.3 322.8,696.5 317.2,693.4 312.4,689.5 307.5,685.5 302.6,681.4 297.6,677.3 293.2,672.5 288.8,667.7 285.0,662.5 281.3,657.1 277.6,651.7 274.4,645.9 271.8,639.9 269.9,633.7 268.9,627.2 268.0,620.7 268.1,614.1 268.3,607.5 269.7,601.0 271.8,594.5 274.3,588.1 276.7,582.0 279.1,576.0 281.4,570.2 283.6,564.5 286.2,559.0 288.8,553.6 291.1,548.2 293.5,543.0 295.8,537.8 298.1,532.6 300.4,527.5 302.6,522.5 305.3,517.6 308.3,512.9 311.3,508.3 314.8,503.9 318.3,499.7 321.8,495.6 325.5,491.6 329.6,487.9 333.7,484.4 338.0,481.1 342.2,477.9 346.5,474.8 350.6,471.6 354.8,468.5 359.4,466.0 364.0,463.6 368.9,461.7 373.7,459.9 378.5,458.1 383.2,456.3 387.9,454.6 392.5,452.9 397.1,451.1 401.9,449.8 406.7,448.8 411.5,447.8 416.3,446.8 421.0,445.8 425.8,444.8 430.6,443.8 435.4,442.8 440.2,442.4 445.1,442.4 450.0,442.3 454.9,442.3 459.8,442.2 464.7,442.2 469.7,442.1 474.7,442.1 479.7,442.0 484.9,442.0 490.2,441.9 495.3,442.4 500.4,443.6 505.5,444.7 510.6,445.8 515.8,447.0 521.2,448.2 526.6,449.4 532.1,450.6 537.8,451.9 543.6,453.2 549.1,455.1 554.4,457.6 559.7,460.2 565.1,462.8 570.7,465.5 576.4,468.2 582.1,471.2 587.0,475.0 592.0,478.9 597.1,482.8 602.3,486.8 607.1,491.3 611.9,495.9 615.7,501.2 619.5,506.5 623.3,512.0 626.4,517.8 629.1,523.8 630.6,530.2 631.6,536.7 632.6,543.2 633.1,549.7 632.9,556.3 631.7,562.9 630.4,569.4 629.1,575.7"/>
<polygon fill="#00a0a0" points="622.6,582.0 620.0,587.9 616.7,593.7 613.5,599.2 610.4,604.5 607.6,609.8 604.8,614.9 602.1,619.9 599.5,624.9 596.9,629.7 594.3,634.5 591.7,639.2 589.0,643.9 586.4,648.5 583.8,653.1 580.8,657.5 577.9,661.9 574.7,666.1 571.2,670.0 567.6,673.9 564.1,677.7 560.4,681.4 556.5,684.8 552.6,688.2 548.7,691.6 544.8,695.0 540.6,697.9 536.3,700.8 531.6,702.9 526.9,705.0 522.2,707.1 517.6,709.2 513.0,711.3 508.1,712.6 503.3,713.9 498.5,715.2 493.6,716.2 488.7,717.0 483.9,717.8 479.0,718.7 474.2,719.5 469.4,720.3 464.6,721.1 459.8,721.8 454.9,721.9 450.0,721.9 445.1,721.9 440.2,721.9 435.3,721.9 430.3,721.9 425.3,721.9 420.3,721.9 415.1,721.9 410.0,721.5 405.0,720.6 400.0,719.5 394.9,718.4 389.8,717.2 384.6,716.0 379.4,714.8 374.0,713.6 368.6,712.3 363.0,711.1 357.3,709.6 352.1,707.3 346.9,704.8 341.7,702.3 336.3,699.7 330.8,697.1 325.2,694.4 319.8,691.3 315.0,687.4 310.2,683.5 305.4,679.6 300.5,675.4 296.3,670.7 292.1,666.0 288.4,660.8 284.8,655.5 281.2,650.2 278.1,644.6 275.8,638.6 274.0,632.5 273.0,626.1 272.2,619.8 272.4,613.3 272.7,606.9 274.1,600.5 276.2,594.2 278.7,588.0 281.1,582.0 283.4,576.2 285.7,570.5 288.0,565.0 290.5,559.6 293.0,554.3 295.3,549.1 297.6,544.0 299.8,538.9 302.0,533.9 304.3,529.0 306.4,524.0 309.0,519.2 311.8,514.6 314.6,510.0 318.0,505.8 321.5,501.7 324.9,497.6 328.5,493.7 332.4,490.1 336.3,486.6 340.5,483.4 344.7,480.3 348.8,477.2 352.9,474.1 356.9,471.1 361.4,468.6 365.8,466.1 370.6,464.3 375.3,462.5 380.0,460.7 384.6,459.0 389.2,457.3 393.7,455.6 398.2,453.9 402.9,452.5 407.6,451.5 412.3,450.6 417.0,449.6 421.6,448.6 426.3,447.6 431.0,446.6 435.7,445.7 440.4,445.3 445.2,445.3 450.0,445.2 454.8,445.2 459.6,445.1 464.4,445.1 469.3,445.0 474.2,445.0 479.1,444.9 484.2,444.9 489.3,444.8 494.4,445.3 499.4,446.4 504.3,447.5 509.4,448.6 514.5,449.7 519.7,450.9 525.0,452.1 530.4,453.3 536.0,454.5 541.7,455.8 547.1,457.7 552.3,460.1 557.5,462.6 562.8,465.2 568.2,467.8 573.8,470.5 579.4,473.4 584.2,477.2 589.1,481.0 594.1,484.8 599.2,488.8 603.8,493.2 608.4,497.8 612.2,502.9 615.9,508.1 619.7,513.4 622.6,519.2 625.1,525.1 626.5,531.4 627.5,537.7 628.5,544.1 628.8,550.5 628.5,556.9 627.2,563.4 626.0,569.7 624.6,575.9"/>
<polygon fill="#00a064" points="616.5,582.0 613.9,587.7 610.8,593.2 607.8,598.6 604.9,603.8 602.2,608.8 599.5,613.8 597.0,618.6 594.4,623.4 591.9,628.1 589.5,632.8 586.9,637.3 584.4,641.8 581.9,646.3 579.4,650.8 576.6,655.1 573.7,659.3 570.7,663.4 567.3,667.2 564.0,671.0 560.6,674.8 557.1,678.5 553.3,681.8 549.6,685.1 545.8,688.4 542.0,691.7 538.0,694.6 533.9,697.5 529.3,699.6 524.7,701.6 520.2,703.6 515.7,705.6 511.2,707.6 506.5,709.0 501.9,710.4 497.2,711.8 492.5,712.7 487.7,713.6 483.0,714.4 478.3,715.3 473.6,716.1 469.0,716.9 464.3,717.8 459.5,718.5 454.8,718.6 450.0,718.6 445.2,718.6 440.5,718.6 435.6,718.6 430.8,718.6 425.9,718.6 421.0,718.6 416.0,718.6 411.0,718.1 406.1,717.3 401.2,716.2 396.3,715.0 391.3,713.9 386.2,712.7 381.1,711.6 375.9,710.4 370.5,709.2 365.1,707.9 359.5,706.5 354.5,704.2 349.5,701.8 344.4,699.3 339.1,696.8 333.8,694.2 328.3,691.6 323.1,688.4 318.5,684.7 313.8,680.9 309.1,677.1 304.3,673.0 300.4,668.4 296.5,663.6 292.9,658.6 289.5,653.5 286.0,648.3 283.1,642.7 281.1,636.9 279.5,630.9 278.5,624.8 277.7,618.6 278.2,612.3 278.6,606.1 279.9,599.9 282.0,593.8 284.5,587.8 286.9,582.0 289.3,576.4 291.6,570.9 293.8,565.6 296.3,560.4 298.7,555.3 300.9,550.3 303.0,545.4 305.2,540.5 307.3,535.6 309.4,530.8 311.5,526.1 313.9,521.4 316.5,516.9 319.1,512.4 322.4,508.3 325.7,504.3 329.0,500.4 332.4,496.6 336.1,493.0 339.9,489.6 343.9,486.5 348.0,483.5 351.9,480.5 355.9,477.5 359.8,474.5 364.0,472.0 368.2,469.5 372.9,467.6 377.5,465.9 382.0,464.2 386.5,462.6 390.9,460.9 395.3,459.2 399.7,457.6 404.2,456.2 408.8,455.2 413.4,454.3 417.9,453.3 422.4,452.4 427.0,451.4 431.5,450.5 436.1,449.6 440.7,449.2 445.4,449.2 450.0,449.1 454.6,449.1 459.3,449.0 464.0,448.9 468.7,448.9 473.5,448.8 478.3,448.8 483.2,448.7 488.2,448.6 493.2,449.1 498.0,450.2 502.8,451.2 507.7,452.3 512.7,453.4 517.8,454.5 522.9,455.7 528.2,456.8 533.6,458.0 539.2,459.2 544.5,461.1 549.4,463.5 554.5,465.9 559.7,468.4 565.0,471.0 570.4,473.6 575.8,476.4 580.5,480.1 585.2,483.8 590.0,487.5 595.0,491.4 599.3,495.8 603.7,500.3 607.4,505.2 611.1,510.3 614.8,515.4 617.6,521.0 619.8,526.8 621.1,532.9 622.1,539.1 623.0,545.2 623.1,551.5 622.6,557.7 621.3,564.0 620.0,570.1 618.6,576.1"/>
<polygon fill="#00a000" points="611.9,582.0 609.3,587.6 606.4,592.9 603.5,598.1 600.7,603.2 598.1,608.1 595.6,612.9 593.1,617.7 590.6,622.3 588.2,626.9 585.8,631.4 583.4,635.9 580.9,640.3 578.5,644.7 576.1,649.1 573.3,653.2 570.5,657.3 567.6,661.3 564.4,665.1 561.2,668.9 558.1,672.7 554.7,676.3 551.0,679.5 547.3,682.8 543.6,686.0 540.0,689.2 536.1,692.2 532.2,695.1 527.6,697.1 523.1,699.0 518.7,701.0 514.3,702.9 509.9,704.8 505.3,706.3 500.8,707.7 496.3,709.2 491.6,710.2 487.0,711.0 482.4,711.9 477.8,712.7 473.2,713.5 468.6,714.4 464.0,715.2 459.4,716.0 454.7,716.1 450.0,716.1 445.3,716.1 440.6,716.1 435.9,716.1 431.2,716.1 426.4,716.1 421.5,716.1 416.6,716.1 411.7,715.6 406.9,714.7 402.1,713.6 397.3,712.5 392.4,711.4 387.4,710.3 382.4,709.2 377.3,708.0 372.0,706.8 366.6,705.6 361.2,704.2 356.3,701.9 351.4,699.5 346.4,697.1 341.3,694.6 336.0,692.1 330.7,689.5 325.7,686.3 321.1,682.7 316.5,679.0 311.9,675.2 307.2,671.2 303.5,666.6 299.8,661.9 296.3,657.0 292.9,651.9 289.5,646.8 286.9,641.4 285.0,635.6 283.6,629.7 282.7,623.7 281.9,617.7 282.5,611.5 283.1,605.5 284.3,599.4 286.3,593.4 288.8,587.6 291.3,582.0 293.6,576.5 295.9,571.2 298.2,566.0 300.6,561.0 302.9,556.1 305.1,551.2 307.2,546.4 309.2,541.6 311.3,536.9 313.3,532.3 315.4,527.6 317.6,523.1 320.0,518.6 322.4,514.2 325.6,510.2 328.9,506.3 332.1,502.5 335.4,498.7 338.9,495.2 342.5,491.8 346.5,488.8 350.4,485.8 354.3,482.9 358.1,480.0 362.0,477.1 366.0,474.5 370.1,472.0 374.6,470.2 379.1,468.5 383.5,466.9 387.9,465.2 392.2,463.6 396.6,462.0 400.9,460.4 405.2,459.0 409.7,458.0 414.2,457.1 418.6,456.1 423.0,455.2 427.5,454.2 431.9,453.3 436.4,452.4 440.9,452.2 445.5,452.1 450.0,452.0 454.5,452.0 459.1,451.9 463.7,451.9 468.3,451.8 473.0,451.7 477.7,451.7 482.5,451.6 487.4,451.5 492.3,452.0 497.0,453.0 501.7,454.0 506.5,455.1 511.4,456.2 516.3,457.2 521.4,458.4 526.6,459.5 531.8,460.7 537.3,461.9 542.5,463.7 547.3,466.0 552.3,468.4 557.4,470.8 562.6,473.3 567.9,475.9 573.1,478.7 577.7,482.3 582.3,485.9 587.0,489.6 591.9,493.4 596.0,497.7 600.2,502.2 603.8,507.0 607.4,511.9 611.1,516.9 613.8,522.4 615.8,528.1 617.1,534.1 618.0,540.1 618.8,546.1 618.9,552.2 618.1,558.4 616.8,564.5 615.5,570.4 614.1,576.3"/>
<polygon fill="#64a000" points="608.8,582.0 606.3,587.5 603.4,592.7 600.6,597.8 598.0,602.8 595.4,607.6 592.9,612.4 590.5,617.0 588.1,621.6 585.7,626.1 583.4,630.5 581.0,634.9 578.6,639.3 576.3,643.6 574.0,647.9 571.2,652.0 568.4,656.0 565.6,659.9 562.5,663.7 559.4,667.5 556.3,671.2 553.1,674.8 549.4,678.0 545.8,681.2 542.2,684.4 538.6,687.6 534.8,690.6 531.0,693.5 526.5,695.4 522.1,697.3 517.7,699.2 513.3,701.1 509.0,703.0 504.5,704.5 500.1,706.0 495.7,707.4 491.1,708.4 486.5,709.3 482.0,710.1 477.4,711.0 472.9,711.8 468.4,712.7 463.8,713.5 459.3,714.3 454.6,714.4 450.0,714.4 445.4,714.4 440.7,714.4 436.1,714.4 431.4,714.4 426.6,714.4 421.9,714.4 417.0,714.4 412.2,714.0 407.4,713.0 402.7,712.0 397.9,710.9 393.1,709.8 388.2,708.7 383.2,707.5 378.2,706.4 373.0,705.2 367.7,704.0 362.3,702.7 357.5,700.4 352.7,698.0 347.7,695.6 342.7,693.1 337.5,690.6 332.2,688.0 327.4,684.9 322.9,681.3 318.3,677.7 313.7,673.9 309.1,670.0 305.5,665.4 301.9,660.7 298.6,655.9 295.3,650.9 291.9,645.9 289.3,640.5 287.7,634.7 286.4,628.9 285.4,623.0 284.6,617.2 285.3,611.0 286.0,605.0 287.3,599.1 289.2,593.2 291.8,587.5 294.2,582.0 296.6,576.6 298.9,571.4 301.1,566.4 303.5,561.4 305.8,556.6 307.8,551.8 309.9,547.1 311.9,542.4 313.9,537.8 315.9,533.2 317.9,528.6 320.1,524.2 322.4,519.8 324.7,515.4 327.8,511.4 331.0,507.6 334.1,503.9 337.4,500.2 340.7,496.6 344.3,493.3 348.2,490.3 352.1,487.4 355.9,484.5 359.6,481.6 363.4,478.8 367.3,476.2 371.3,473.6 375.7,471.9 380.2,470.2 384.5,468.6 388.8,467.0 393.1,465.4 397.4,463.8 401.6,462.2 405.9,460.8 410.3,459.8 414.7,458.9 419.1,458.0 423.4,457.1 427.8,456.1 432.2,455.2 436.6,454.4 441.1,454.1 445.5,454.1 450.0,454.0 454.5,453.9 459.0,453.9 463.5,453.8 468.0,453.7 472.6,453.6 477.3,453.6 482.0,453.5 486.9,453.4 491.6,453.9 496.3,454.9 500.9,455.9 505.7,456.9 510.5,458.0 515.4,459.1 520.3,460.2 525.4,461.3 530.7,462.4 536.0,463.6 541.1,465.4 545.9,467.7 550.8,470.0 555.8,472.4 560.9,474.9 566.2,477.4 571.3,480.2 575.8,483.7 580.4,487.3 585.0,490.9 589.8,494.7 593.8,499.0 597.8,503.4 601.4,508.1 605.0,513.0 608.7,517.9 611.3,523.3 613.2,529.0 614.4,534.9 615.3,540.8 616.1,546.7 616.0,552.7 615.2,558.8 613.8,564.8 612.5,570.6 611.1,576.4"/>
<polygon fill="#a0a000" points="605.7,582.0 603.2,587.3 600.4,592.5 597.8,597.5 595.2,602.4 592.7,607.2 590.2,611.8 587.9,616.4 585.5,620.9 583.2,625.3 580.9,629.7 578.6,634.0 576.3,638.2 574.1,642.5 571.8,646.8 569.1,650.7 566.3,654.7 563.5,658.6 560.5,662.3 557.6,666.1 554.6,669.8 551.4,673.3 547.9,676.5 544.3,679.7 540.8,682.8 537.2,685.9 533.5,688.9 529.8,691.8 525.4,693.7 521.0,695.6 516.7,697.5 512.4,699.3 508.1,701.1 503.7,702.7 499.4,704.2 495.0,705.7 490.5,706.7 486.0,707.6 481.5,708.4 477.1,709.3 472.6,710.1 468.1,711.0 463.6,711.9 459.1,712.7 454.6,712.8 450.0,712.8 445.4,712.8 440.9,712.8 436.3,712.8 431.6,712.8 426.9,712.8 422.2,712.8 417.4,712.8 412.6,712.3 408.0,711.3 403.3,710.3 398.6,709.2 393.8,708.1 389.0,707.0 384.1,705.9 379.1,704.8 374.0,703.6 368.7,702.5 363.5,701.1 358.7,698.8 353.9,696.5 349.1,694.1 344.1,691.7 339.0,689.2 333.8,686.6 329.0,683.5 324.6,680.0 320.1,676.3 315.6,672.7 311.0,668.8 307.6,664.2 304.1,659.6 300.8,654.7 297.6,649.9 294.3,644.9 291.8,639.6 290.4,633.9 289.1,628.1 288.2,622.3 287.4,616.6 288.2,610.5 289.0,604.6 290.2,598.8 292.1,593.0 294.7,587.4 297.1,582.0 299.5,576.7 301.8,571.6 304.0,566.7 306.4,561.8 308.6,557.1 310.6,552.4 312.6,547.7 314.6,543.2 316.6,538.6 318.5,534.1 320.5,529.7 322.5,525.3 324.7,520.9 326.9,516.5 329.9,512.7 333.1,508.9 336.2,505.2 339.3,501.6 342.6,498.1 346.1,494.8 349.9,491.9 353.7,489.0 357.4,486.1 361.1,483.3 364.8,480.5 368.7,477.9 372.5,475.3 376.9,473.6 381.2,472.0 385.5,470.4 389.8,468.8 394.0,467.2 398.2,465.6 402.3,464.1 406.6,462.6 410.9,461.7 415.2,460.8 419.5,459.9 423.8,458.9 428.1,458.0 432.4,457.1 436.8,456.3 441.2,456.1 445.6,456.0 450.0,455.9 454.4,455.9 458.8,455.8 463.3,455.7 467.8,455.6 472.3,455.6 476.9,455.5 481.6,455.4 486.3,455.3 491.0,455.8 495.6,456.8 500.2,457.8 504.9,458.8 509.6,459.8 514.4,460.9 519.3,461.9 524.3,463.0 529.5,464.2 534.8,465.3 539.8,467.1 544.5,469.3 549.4,471.7 554.3,474.0 559.3,476.5 564.5,478.9 569.5,481.7 573.9,485.2 578.4,488.7 583.0,492.3 587.7,496.0 591.6,500.2 595.5,504.7 599.0,509.3 602.6,514.1 606.2,518.9 608.7,524.2 610.5,529.8 611.7,535.6 612.5,541.5 613.3,547.3 613.2,553.2 612.2,559.2 610.9,565.1 609.6,570.8 608.1,576.5"/>
<polygon fill="#a06400" points="601.1,582.0 598.6,587.2 596.0,592.2 593.5,597.1 591.0,601.8 588.6,606.4 586.3,611.0 584.0,615.4 581.7,619.8 579.5,624.1 577.3,628.3 575.1,632.5 572.9,636.7 570.7,640.9 568.5,645.0 565.9,648.9 563.2,652.7 560.5,656.5 557.7,660.2 554.8,663.9 552.0,667.6 549.0,671.1 545.5,674.2 542.0,677.3 538.6,680.4 535.2,683.5 531.6,686.5 528.0,689.4 523.7,691.2 519.4,693.0 515.1,694.8 510.9,696.6 506.7,698.4 502.5,699.9 498.3,701.5 494.1,703.1 489.7,704.1 485.3,705.0 480.9,705.9 476.5,706.7 472.1,707.6 467.8,708.5 463.4,709.3 459.0,710.2 454.5,710.3 450.0,710.3 445.5,710.3 441.0,710.3 436.5,710.3 432.0,710.3 427.4,710.3 422.7,710.3 418.0,710.3 413.4,709.8 408.8,708.8 404.2,707.8 399.6,706.7 394.9,705.7 390.2,704.6 385.4,703.5 380.5,702.4 375.5,701.3 370.3,700.1 365.1,698.8 360.5,696.5 355.8,694.2 351.1,691.9 346.2,689.5 341.3,687.0 336.2,684.5 331.6,681.4 327.2,677.9 322.9,674.4 318.4,670.8 313.9,667.0 310.7,662.4 307.4,657.8 304.2,653.1 301.1,648.3 297.9,643.5 295.6,638.2 294.3,632.6 293.2,627.0 292.3,621.3 291.6,615.7 292.5,609.8 293.4,604.0 294.6,598.3 296.5,592.7 299.0,587.3 301.5,582.0 303.9,576.9 306.2,571.9 308.4,567.1 310.7,562.4 312.8,557.8 314.8,553.3 316.7,548.8 318.6,544.3 320.5,539.9 322.4,535.6 324.3,531.2 326.2,526.9 328.2,522.6 330.2,518.3 333.2,514.5 336.2,510.9 339.3,507.3 342.3,503.8 345.4,500.3 348.7,497.0 352.5,494.2 356.1,491.4 359.8,488.6 363.4,485.8 367.0,483.1 370.7,480.4 374.3,477.8 378.6,476.1 382.9,474.5 387.1,473.0 391.2,471.4 395.3,469.9 399.4,468.3 403.5,466.8 407.6,465.4 411.8,464.5 416.0,463.6 420.2,462.7 424.4,461.8 428.6,460.9 432.8,460.0 437.1,459.2 441.4,459.0 445.7,458.9 450.0,458.8 454.3,458.8 458.6,458.7 463.0,458.6 467.4,458.5 471.8,458.5 476.3,458.4 480.8,458.3 485.5,458.2 490.1,458.6 494.6,459.6 499.1,460.6 503.6,461.6 508.3,462.6 513.0,463.6 517.8,464.6 522.7,465.7 527.7,466.8 532.9,467.9 537.8,469.6 542.4,471.8 547.1,474.1 551.9,476.4 556.9,478.8 561.9,481.2 566.8,484.0 571.1,487.4 575.5,490.8 580.0,494.3 584.6,497.9 588.3,502.1 592.0,506.5 595.5,511.1 599.0,515.7 602.6,520.4 604.9,525.6 606.5,531.1 607.7,536.8 608.4,542.5 609.2,548.2 608.9,554.0 607.8,559.8 606.4,565.6 605.1,571.2 603.6,576.6"/>
<polygon fill="#a00000" points="598.1,582.0 595.6,587.1 593.1,592.0 590.6,596.8 588.2,601.4 585.9,606.0 583.6,610.4 581.4,614.8 579.2,619.0 577.0,623.3 574.8,627.4 572.7,631.6 570.6,635.7 568.5,639.8 566.3,643.9 563.7,647.7 561.1,651.4 558.4,655.1 555.7,658.8 553.0,662.5 550.3,666.2 547.3,669.6 543.9,672.7 540.5,675.8 537.2,678.8 533.8,681.8 530.4,684.8 526.8,687.8 522.5,689.6 518.3,691.3 514.1,693.1 510.0,694.8 505.9,696.5 501.7,698.1 497.6,699.8 493.5,701.4 489.1,702.4 484.8,703.3 480.5,704.2 476.2,705.0 471.8,705.9 467.5,706.8 463.2,707.6 458.8,708.5 454.4,708.7 450.0,708.7 445.6,708.7 441.1,708.7 436.7,708.7 432.2,708.7 427.7,708.7 423.1,708.7 418.4,708.7 413.8,708.1 409.4,707.1 404.8,706.1 400.3,705.1 395.7,704.0 391.0,703.0 386.2,701.9 381.4,700.8 376.5,699.7 371.4,698.6 366.3,697.2 361.7,695.0 357.1,692.7 352.4,690.4 347.6,688.0 342.8,685.6 337.7,683.1 333.3,680.0 329.0,676.5 324.7,673.1 320.2,669.5 315.8,665.8 312.7,661.3 309.6,656.7 306.5,652.0 303.4,647.3 300.3,642.5 298.1,637.3 297.0,631.7 296.0,626.2 295.1,620.6 294.3,615.1 295.4,609.3 296.4,603.6 297.5,598.0 299.4,592.5 301.9,587.2 304.4,582.0 306.8,577.0 309.1,572.1 311.3,567.4 313.6,562.8 315.7,558.3 317.6,553.9 319.5,549.5 321.3,545.1 323.2,540.8 325.0,536.5 326.8,532.2 328.7,528.0 330.6,523.8 332.5,519.5 335.3,515.8 338.3,512.2 341.3,508.7 344.3,505.2 347.3,501.7 350.5,498.5 354.2,495.7 357.8,492.9 361.4,490.2 364.9,487.5 368.4,484.8 372.0,482.1 375.5,479.5 379.7,477.8 383.9,476.3 388.1,474.7 392.1,473.2 396.2,471.7 400.2,470.2 404.2,468.7 408.2,467.2 412.4,466.3 416.6,465.4 420.7,464.5 424.8,463.6 429.0,462.8 433.1,461.9 437.3,461.1 441.5,461.0 445.8,460.9 450.0,460.8 454.2,460.7 458.5,460.6 462.8,460.6 467.1,460.5 471.4,460.4 475.9,460.3 480.4,460.2 484.9,460.1 489.5,460.5 493.9,461.5 498.3,462.4 502.8,463.4 507.4,464.4 512.0,465.4 516.7,466.4 521.6,467.5 526.5,468.6 531.6,469.7 536.5,471.3 541.0,473.5 545.7,475.8 550.4,478.0 555.2,480.4 560.2,482.8 565.0,485.5 569.3,488.8 573.6,492.2 578.0,495.7 582.5,499.2 586.1,503.4 589.6,507.8 593.1,512.2 596.6,516.7 600.1,521.3 602.4,526.5 603.9,532.0 605.0,537.6 605.7,543.2 606.4,548.8 606.1,554.5 604.8,560.2 603.4,565.9 602.1,571.4 600.6,576.7"/>
<polygon fill="#999999" stroke="#c00000" stroke-width="0.8" points="595.0,582.0 592.5,587.0 590.1,591.8 587.8,596.5 585.5,601.0 583.2,605.5 581.0,609.8 578.8,614.1 576.6,618.3 574.5,622.5 572.4,626.6 570.3,630.6 568.3,634.7 566.2,638.7 564.2,642.7 561.6,646.4 559.0,650.1 556.4,653.8 553.8,657.4 551.2,661.1 548.6,664.7 545.7,668.2 542.4,671.2 539.0,674.2 535.7,677.2 532.4,680.2 529.1,683.2 525.7,686.1 521.4,687.9 517.2,689.6 513.1,691.3 509.0,693.0 505.0,694.7 500.9,696.3 496.9,698.0 492.8,699.7 488.6,700.7 484.3,701.6 480.0,702.5 475.8,703.3 471.5,704.2 467.3,705.1 463.0,706.0 458.7,706.8 454.4,707.0 450.0,707.0 445.6,707.0 441.3,707.0 436.9,707.0 432.4,707.0 428.0,707.0 423.4,707.0 418.8,707.0 414.3,706.4 409.9,705.4 405.4,704.4 401.0,703.4 396.4,702.4 391.8,701.3 387.1,700.3 382.3,699.2 377.4,698.1 372.4,697.0 367.4,695.7 362.9,693.5 358.4,691.2 353.8,688.9 349.1,686.5 344.2,684.1 339.3,681.7 334.9,678.5 330.7,675.2 326.5,671.8 322.1,668.3 317.8,664.6 314.8,660.1 311.8,655.5 308.8,650.9 305.7,646.2 302.7,641.5 300.6,636.4 299.6,630.9 298.7,625.4 297.8,619.9 297.1,614.5 298.2,608.8 299.4,603.2 300.5,597.7 302.3,592.3 304.9,587.1 307.3,582.0 309.7,577.1 312.0,572.4 314.2,567.7 316.4,563.2 318.5,558.8 320.4,554.4 322.2,550.1 324.0,545.9 325.8,541.6 327.6,537.4 329.4,533.3 331.1,529.1 332.9,524.9 334.7,520.7 337.5,517.0 340.4,513.5 343.4,510.1 346.3,506.6 349.1,503.2 352.3,500.0 355.9,497.2 359.4,494.5 362.9,491.8 366.4,489.2 369.9,486.5 373.3,483.8 376.8,481.2 380.9,479.5 385.0,478.0 389.1,476.5 393.1,475.0 397.1,473.5 401.0,472.0 405.0,470.5 408.9,469.0 413.0,468.1 417.1,467.3 421.2,466.4 425.2,465.5 429.3,464.6 433.4,463.8 437.5,463.0 441.7,462.9 445.8,462.8 450.0,462.7 454.2,462.7 458.4,462.6 462.6,462.5 466.8,462.4 471.1,462.3 475.5,462.2 479.9,462.1 484.4,462.1 488.9,462.4 493.2,463.3 497.6,464.3 502.0,465.3 506.5,466.2 511.0,467.2 515.7,468.2 520.4,469.3 525.3,470.3 530.3,471.4 535.1,473.0 539.6,475.2 544.2,477.4 548.8,479.6 553.6,481.9 558.5,484.3 563.2,487.0 567.4,490.3 571.6,493.6 576.0,497.0 580.4,500.5 583.9,504.7 587.3,509.0 590.7,513.4 594.2,517.8 597.7,522.3 599.9,527.5 601.2,532.9 602.3,538.3 603.0,543.9 603.7,549.3 603.3,555.0 601.8,560.7 600.5,566.2 599.1,571.6 597.6,576.8"/>
</g>
<polygon fill="#000" shape-rendering="crispEdges" points="545,217 700,250 506,506 425,670 369,897 216,897 394,664 474,500"/>
<g fill="none" stroke-width="1" shape-rendering="crispEdges">
<polyline stroke="#00ffff" points="462.5,549.5 545,217 700,250 472,550.5"/>
<polyline stroke="#00ffff" points="216,897 428.5,619"/>
<polyline stroke="#00ffff" points="369,897 437.5,620"/>
<polyline stroke="#ff00ff" points="593,228 505,407.5 465,549"/>
<polyline stroke="#ff00ff" points="651.5,240 563,421 471,550"/>
<polyline stroke="#ff00ff" points="428.5,619 336,750 264,897"/>
<polyline stroke="#ff00ff" points="437,620 396.6,760 328,897"/>
<polyline stroke="#0000ff" points="474,500 506,506"/>
<polyline stroke="#0000ff" points="394,664 425,670"/>
<polyline stroke="#0000ff" points="474,500 394,664"/>
<polyline stroke="#0000ff" points="506,506 425,670"/>
<polygon stroke="#ffa000" points="462.5,549.5 472,550.5 438,620 428.5,619"/>
<polyline stroke="#ff0000" stroke-width="2" stroke-dasharray="2 1" points="467,550 433,619.5"/>
</g>
<g stroke="#fff" stroke-width="1" fill="none" shape-rendering="crispEdges">
<line x1="545" y1="420.5" x2="660" y2="420.5"/>
<line x1="602.5" y1="363" x2="602.5" y2="478"/>
<rect x="595.5" y="413.5" width="14" height="14"/>
</g>
<path d="M542,557 h1.5 v-2 h2 v1 h12 v2 h1.5 v2 h-1.5 v2.5 h-1.5 v1.5 h-1.5 v-1 h-12 v-1 h-0.5z" fill="#ff0000"/><path d="M544,558.5 h4 l1,-0.8 h1.5 l0.7,0.8 h5.3 v1 h-12.5z" fill="#fff"/>
<g fill="none" stroke-width="1">
<polyline stroke="#ff0000" points="55,846 82,846 95,845"/>
<polyline stroke="#0000ff" points="55,846 55,815"/>
<polyline stroke="#00c000" points="54,845 53,822"/>
<path stroke="#ff0000" d="M95,837 l6,8 M101,837 l-6,8"/>
<path stroke="#0000ff" d="M55,807 h6 l-6,7 h6"/>
<path stroke="#00c000" d="M53,812 l3,5 l3,-5"/>
</g>
</g>
</svg>
<div class="a" style="left:770px;top:333px;width:549px;height:318px;background:#f0f0f0"></div>
<div class="a" style="left:770px;top:333px;width:549px;height:24px;background:#fff"></div>
<div class="a" style="left:773px;top:336px;font-size:12px;line-height:16px;color:#a7a7a7">机场限高检测</div>
<div class="a" style="left:1299px;top:335px;width:19px;height:19px;background:#e6e6e6;color:#c8c8c8;font-size:11px;line-height:18px;text-align:center">×</div>
<div class="a" style="left:779px;top:364px;width:16px;height:16px;background:#dde3ea;border:1px solid #b9c2cc"></div>
<div class="a" style="left:802px;top:364px;width:16px;height:16px;background:#dde3ea;border:1px solid #b9c2cc"></div>
<div class="a" style="left:825px;top:364px;width:16px;height:16px;background:#dde3ea;border:1px solid #b9c2cc"></div>
<div class="a" style="left:848px;top:364px;width:16px;height:16px;background:#dde3ea;border:1px solid #b9c2cc"></div>
<svg class="a" style="left:779px;top:364px" width="90" height="16">
<path d="M5,6 a4,4 0 0 1 7,-1 M12,3 v3 h-3 M11,10 a4,4 0 0 1 -7,1 M4,13 v-3 h3" stroke="#1a5ab8" stroke-width="1.5" fill="none"/>
<text x="25.5" y="12.5" font-size="12" font-weight="bold" font-style="italic" fill="#2a5ec8" font-family="Liberation Sans">W</text>
<rect x="49" y="3" width="11" height="10" fill="#fff" stroke="#2a6ad0"/><path d="M49,6.5 h11 M49,9.5 h11 M52.5,3 v10 M56,3 v10" stroke="#2a6ad0"/>
<path d="M73,3 h7 v10 h-7 z M73,3 l3,2 v10 l-3,-2" fill="#fff" stroke="#1a3a7a"/>
</svg>
<div class="a" style="left:954px;top:364px;font-size:12px;line-height:16px;color:#000">透明度:</div>
<div class="a" style="left:1008px;top:369px;width:163px;height:4px;background:#e7e7e7;border:1px solid #d6d6d6"></div>
<div class="a" style="left:1069px;top:360px;width:10px;height:21px;background:#0078d7"></div>
<div class="a" style="left:1178px;top:361px;width:42px;height:23px;background:#fff;border:1px solid #7a7a7a;font-size:11px;line-height:20px;padding-left:4px;color:#000">40</div>
<div class="a" style="left:1247px;top:367px;width:13px;height:13px;background:#fff;border:1px solid #333"></div>
<div class="a" style="left:1262px;top:366px;font-size:12px;line-height:16px;color:#000">视图定位</div>
<div class="a" style="left:778px;top:386px;width:533px;height:255px;background:#fff;border:1px solid #6f747c;border-width:1px 2px 2px 1px"></div>
<svg class="a" style="left:0;top:0;pointer-events:none" width="1352" height="916"><g stroke="#ececec" stroke-width="1">
<line x1="828.5" y1="388" x2="828.5" y2="639"/>
<line x1="924.5" y1="388" x2="924.5" y2="639"/>
<line x1="1020.5" y1="388" x2="1020.5" y2="639"/>
<line x1="1116.5" y1="388" x2="1116.5" y2="639"/>
<line x1="1212.5" y1="388" x2="1212.5" y2="639"/>
<line x1="1308.5" y1="388" x2="1308.5" y2="639"/>

<line x1="779" y1="428.5" x2="1309" y2="428.5"/>
<line x1="779" y1="445.5" x2="1309" y2="445.5"/>
<line x1="779" y1="462.5" x2="1309" y2="462.5"/>
<line x1="779" y1="479.5" x2="1309" y2="479.5"/>
<line x1="779" y1="496.5" x2="1309" y2="496.5"/>
<line x1="779" y1="513.5" x2="1309" y2="513.5"/>
<line x1="779" y1="530.5" x2="1309" y2="530.5"/>
<line x1="779" y1="547.5" x2="1309" y2="547.5"/>
<line x1="779" y1="564.5" x2="1309" y2="564.5"/>
<line x1="779" y1="581.5" x2="1309" y2="581.5"/>
<line x1="779" y1="598.5" x2="1309" y2="598.5"/>
<line x1="779" y1="615.5" x2="1309" y2="615.5"/>
<line x1="779" y1="632.5" x2="1309" y2="632.5"/>
</g></svg>
<div class="a" style="left:742px;top:392px;width:120px;text-align:center;font-size:12px;line-height:16px;color:#000">序号</div>
<div class="a" style="left:815px;top:392px;width:120px;text-align:center;font-size:12px;line-height:16px;color:#000">建筑编号</div>
<div class="a" style="left:911px;top:392px;width:120px;text-align:center;font-size:12px;line-height:16px;color:#000">建筑正负零标高</div>
<div class="a" style="left:1008px;top:392px;width:120px;text-align:center;font-size:12px;line-height:16px;color:#000">建筑相对高度</div>
<div class="a" style="left:1104px;top:392px;width:120px;text-align:center;font-size:12px;line-height:16px;color:#000">机场控制高度</div>
<div class="a" style="left:1200px;top:392px;width:120px;text-align:center;font-size:12px;line-height:16px;color:#000">高度差</div>
<div class="a" style="left:745px;top:414px;width:120px;text-align:center;font-size:11px;line-height:14px;color:#000">1</div>
<div class="a" style="left:815px;top:414px;width:120px;text-align:center;font-size:11px;line-height:14px;color:#000">11#</div>
<div class="a" style="left:911px;top:414px;width:120px;text-align:center;font-size:11px;line-height:14px;color:#000">31.50</div>
<div class="a" style="left:1008px;top:414px;width:120px;text-align:center;font-size:11px;line-height:14px;color:#000">50.00</div>
<div class="a" style="left:1104px;top:414px;width:120px;text-align:center;font-size:11px;line-height:14px;color:#000">45.00</div>
<div class="a" style="left:1200px;top:414px;width:120px;text-align:center;font-size:11px;line-height:14px;color:#000">-3.80</div>
<div class="a" style="left:745px;top:431px;width:120px;text-align:center;font-size:11px;line-height:14px;color:#000">2</div>
<div class="a" style="left:815px;top:431px;width:120px;text-align:center;font-size:11px;line-height:14px;color:#000">11#</div>
<div class="a" style="left:911px;top:431px;width:120px;text-align:center;font-size:11px;line-height:14px;color:#000">31.50</div>
<div class="a" style="left:1008px;top:431px;width:120px;text-align:center;font-size:11px;line-height:14px;color:#000">50.00</div>
<div class="a" style="left:1104px;top:431px;width:120px;text-align:center;font-size:11px;line-height:14px;color:#000">45.00</div>
<div class="a" style="left:1200px;top:431px;width:120px;text-align:center;font-size:11px;line-height:14px;color:#000">-3.80</div>
<div class="a" style="left:745px;top:448px;width:120px;text-align:center;font-size:11px;line-height:14px;color:#000">3</div>
<div class="a" style="left:815px;top:448px;width:120px;text-align:center;font-size:11px;line-height:14px;color:#000">11#</div>
<div class="a" style="left:911px;top:448px;width:120px;text-align:center;font-size:11px;line-height:14px;color:#000">31.50</div>
<div class="a" style="left:1008px;top:448px;width:120px;text-align:center;font-size:11px;line-height:14px;color:#000">50.00</div>
<div class="a" style="left:1104px;top:448px;width:120px;text-align:center;font-size:11px;line-height:14px;color:#000">45.00</div>
<div class="a" style="left:1200px;top:448px;width:120px;text-align:center;font-size:11px;line-height:14px;color:#000">-3.80</div>
<div class="a" style="left:745px;top:465px;width:120px;text-align:center;font-size:11px;line-height:14px;color:#000">4</div>
<div class="a" style="left:815px;top:465px;width:120px;text-align:center;font-size:11px;line-height:14px;color:#000">11#</div>
<div class="a" style="left:911px;top:465px;width:120px;text-align:center;font-size:11px;line-height:14px;color:#000">31.50</div>
<div class="a" style="left:1008px;top:465px;width:120px;text-align:center;font-size:11px;line-height:14px;color:#000">50.00</div>
<div class="a" style="left:1104px;top:465px;width:120px;text-align:center;font-size:11px;line-height:14px;color:#000">45.00</div>
<div class="a" style="left:1200px;top:465px;width:120px;text-align:center;font-size:11px;line-height:14px;color:#000">-3.80</div>
<svg class="a" style="left:0;top:0" width="60" height="50">
<defs>
<linearGradient id="lg" x1="0" y1="0" x2="0" y2="1"><stop offset="0" stop-color="#fbfcfe"/><stop offset="0.45" stop-color="#eceef4"/><stop offset="0.5" stop-color="#c6ccda"/><stop offset="0.62" stop-color="#dfe3eb"/><stop offset="1" stop-color="#f2f4f8"/></linearGradient>
<linearGradient id="cy" x1="0" y1="0" x2="0" y2="1"><stop offset="0" stop-color="#c8f8ff"/><stop offset="0.3" stop-color="#10d8f0"/><stop offset="1" stop-color="#00e8f8"/></linearGradient>
</defs>
<circle cx="22.8" cy="24.3" r="18.2" fill="#7a7d84" opacity="0.5"/>
<circle cx="22.5" cy="24" r="17.8" fill="#fff" stroke="#8a8d93" stroke-width="1"/>
<circle cx="22.5" cy="24" r="15.6" fill="url(#lg)"/>
<path d="M25,12.8 C18,11.5 11.5,15.5 11.5,23 C11.5,27.5 13.5,31 16.2,33.8 L23.5,26.8" fill="none" stroke="url(#cy)" stroke-width="2.4"/>
<path d="M21.5,25 l3.5,0.5 -1,3.5z" fill="#00e0f0"/>
<path d="M19.5,22 L27.5,15.5 C31.5,18 33.5,22.5 33,27.5" fill="none" stroke="#f8d800" stroke-width="2.2"/>
<path d="M18.5,20 l0.8,4.2 4,-0.8z" fill="#f8d800"/>
<ellipse cx="29.5" cy="31.8" rx="5.6" ry="4.8" fill="#e4304e" stroke="#fff" stroke-width="0.6"/><path d="M26.5,31.2 h6.2" stroke="#f8d0d8" stroke-width="1.1"/><path d="M27.2,33.2 q2.5,1.6 5.6,-0.2" stroke="#f0a0b0" stroke-width="0.9" fill="none"/><ellipse cx="29.6" cy="29.8" rx="2" ry="0.9" fill="#f8c8d0"/>
</svg>
<svg class="a" style="left:36px;top:5px" width="425" height="22">
<path d="M2,0.5 H414 A7,10 0 0 1 414,20.5 H10 C8,10 5,3 2,0.5 Z" fill="#e9ecf2" stroke="#a3a8b2" stroke-width="1"/>
<line x1="168.5" y1="1" x2="168.5" y2="20" stroke="#c5cad3"/>
<rect x="169" y="1" width="121" height="19" fill="#e4e7ee"/>
<line x1="290.5" y1="1" x2="290.5" y2="20" stroke="#b7bcc6"/>
<rect x="292" y="1" width="122" height="19" fill="#e4e7ee"/>
<rect x="174" y="2" width="11" height="16" fill="#fff"/>
<rect x="295" y="2" width="12" height="16" fill="#fff"/>
<path d="M280,9 h6 l-3,3 z M404,9 h6 l-3,3z" fill="#15236e"/><line x1="414.5" y1="1" x2="414.5" y2="20" stroke="#a9b3be"/>
</svg>
<svg class="a" style="left:40px;top:2px" width="170" height="28">
<path d="M14.5,7.5 h6 l4,4 v8.5 h-10z" fill="#dce8f8" stroke="#1a3a98" stroke-width="1.2"/>
<path d="M20.5,7.5 v4 h4" fill="none" stroke="#1a3a98" stroke-width="1"/>
<path d="M36,11 h4 l1,1.5 h6 v7.5 h-11z" fill="#bcd4f0" stroke="#1a3a98" stroke-width="1.1"/>
<path d="M36,20 l3,-6 h11 l-3,6z" fill="#d8e6f8" stroke="#1a3a98" stroke-width="1"/>
<path d="M43,11 q1,-4 5,-4 l-1,-1.5 3,2 -3,2 1,-1.5 q-3,0 -4,3z" fill="#e8b800" stroke="#8a6a00" stroke-width="0.5"/>
<rect x="58.5" y="8.5" width="11" height="12" fill="#d8e6f8" stroke="#1a3a98" stroke-width="1.2"/>
<path d="M61,8.5 v3.5 h6 v-3.5 M58.5,14 h11" stroke="#1a3a98" stroke-width="1" fill="none"/>
<rect x="79.5" y="8.5" width="11" height="12" fill="#d8e6f8" stroke="#1a3a98" stroke-width="1.2"/>
<path d="M82,8.5 v3.5 h6 v-3.5 M79.5,14 h11" stroke="#1a3a98" stroke-width="1" fill="none"/>
<path d="M86,19 l6,-7 l1.5,1.5 l-6,7 l-2,0.5z" fill="#f0c020" stroke="#6a4a00" stroke-width="0.6"/>
<path d="M101.5,13.5 l5,-5 v3 h5 q4.5,0 4.5,4.5 v5.5 h-2.5 v-4 q0,-2.5 -2.5,-2.5 h-4.5 v3z" fill="#e6e8ee" stroke="#222" stroke-width="1.1" stroke-linejoin="round"/>
<path d="M137,13.5 l-5,-5 v3 h-5 q-4.5,0 -4.5,4.5 v5.5 h2.5 v-4 q0,-2.5 2.5,-2.5 h4.5 v3z" fill="#fff"/>
<path d="M145,16 l6.5,4.5 l6.5,-4.5 M145,18.5 l6.5,4.5 l6.5,-4.5" fill="none" stroke="#5a78c0" stroke-width="1"/>
<path d="M145,14 l6.5,4.5 l6.5,-4.5 l-6.5,-4z" fill="#e8a030" stroke="#c06020" stroke-width="1"/>
<path d="M145,11.5 l6.5,4.5 l6.5,-4.5 l-6.5,-4.5z" fill="#c8e0f8" stroke="#5a78c0" stroke-width="1"/>
</svg>
<div class="a" style="left:225px;top:9px;font-size:12px;line-height:16px;color:#000">未定义</div>
<div class="a" style="left:363px;top:9px;font-size:12px;line-height:16px;color:#000">未定义线</div>
<svg class="a" style="left:348px;top:7px" width="14" height="18"><circle cx="7" cy="7" r="5" fill="none" stroke="#dfe2e8" stroke-width="1.5"/><rect x="5" y="12" width="4" height="4" fill="#dfe2e8"/></svg>
<svg class="a" style="left:465px;top:10px" width="10" height="10"><path d="M1.5,2.5 h6 M1.5,5 h6 l-3,3z" stroke="#15236e" fill="#15236e" stroke-width="1"/></svg>
<div class="a" style="left:359px;top:31px;width:50px;height:22px;border:1px solid #7e8aa6;border-bottom:none;border-radius:4px 4px 0 0;background:linear-gradient(#eef1f7 0%,#d3dcea 45%,#a9bcd8 50%,#bcd2e6 85%,#cfeaf2 100%);box-shadow:inset 1px 1px 0 #fff"></div>
<div class="a tx" style="left:51.4px;top:34px;width:40px;text-align:center;font-size:12px;line-height:16px;color:#0e1a66">文件</div>
<div class="a tx" style="left:103.4px;top:34px;width:40px;text-align:center;font-size:12px;line-height:16px;color:#0e1a66">道路</div>
<div class="a tx" style="left:155.4px;top:34px;width:40px;text-align:center;font-size:12px;line-height:16px;color:#0e1a66">建筑</div>
<div class="a tx" style="left:207.4px;top:34px;width:40px;text-align:center;font-size:12px;line-height:16px;color:#0e1a66">环境</div>
<div class="a tx" style="left:259.4px;top:34px;width:40px;text-align:center;font-size:12px;line-height:16px;color:#0e1a66">管理</div>
<div class="a tx" style="left:311.4px;top:34px;width:40px;text-align:center;font-size:12px;line-height:16px;color:#0e1a66">日照</div>
<div class="a tx" style="left:363.4px;top:34px;width:40px;text-align:center;font-size:12px;line-height:16px;color:#0e1a66">核计</div>
<div class="a tx" style="left:415.4px;top:34px;width:40px;text-align:center;font-size:12px;line-height:16px;color:#0e1a66">造型</div>
<div class="a tx" style="left:467.4px;top:34px;width:40px;text-align:center;font-size:12px;line-height:16px;color:#0e1a66">定位</div>
<div class="a tx" style="left:519.4px;top:34px;width:40px;text-align:center;font-size:12px;line-height:16px;color:#0e1a66">辅助</div>
<div class="a tx" style="left:571.4px;top:34px;width:40px;text-align:center;font-size:12px;line-height:16px;color:#0e1a66">视图</div>
<div class="a tx" style="left:623.4px;top:34px;width:40px;text-align:center;font-size:12px;line-height:16px;color:#0e1a66">标注</div>
<div class="a tx" style="left:675.4px;top:34px;width:40px;text-align:center;font-size:12px;line-height:16px;color:#0e1a66">基本</div>
<div class="a tx" style="left:727.4px;top:34px;width:40px;text-align:center;font-size:12px;line-height:16px;color:#0e1a66">常用</div>
<div class="a tx" style="left:779.4px;top:34px;width:40px;text-align:center;font-size:12px;line-height:16px;color:#0e1a66">帮助</div>
<div class="a" style="left:767px;top:57px;width:53px;height:65px;border:1px solid #d5dae6;background:linear-gradient(#bcc5db,#98a9cc)"></div>
<div class="a tx" style="left:-6.5px;top:93px;width:80px;text-align:center;font-size:12px;line-height:16px;color:#0e1a66">失误检测</div>
<div class="a tx" style="left:46.7px;top:93px;width:80px;text-align:center;font-size:12px;line-height:16px;color:#0e1a66">公共绿地</div>
<div class="a tx" style="left:99.5px;top:93px;width:80px;text-align:center;font-size:12px;line-height:16px;color:#0e1a66">车位复核</div>
<div class="a tx" style="left:152.5px;top:93px;width:80px;text-align:center;font-size:12px;line-height:16px;color:#0e1a66">面宽检测</div>
<div class="a tx" style="left:205.0px;top:93px;width:80px;text-align:center;font-size:12px;line-height:16px;color:#0e1a66">综合检测</div>
<div class="a tx" style="left:258.4px;top:93px;width:80px;text-align:center;font-size:12px;line-height:16px;color:#0e1a66">建筑间距</div>
<div class="a tx" style="left:311.7px;top:93px;width:80px;text-align:center;font-size:12px;line-height:16px;color:#0e1a66">分类明晰</div>
<div class="a tx" style="left:370.5px;top:93px;width:80px;text-align:center;font-size:12px;line-height:16px;color:#0e1a66">通透率检测</div>
<div class="a tx" style="left:441.5px;top:93px;width:80px;text-align:center;font-size:12px;line-height:16px;color:#0e1a66">机场限高检测</div>
<div class="a tx" style="left:512.7px;top:93px;width:80px;text-align:center;font-size:12px;line-height:16px;color:#0e1a66">地下室检测</div>
<div class="a tx" style="left:582.3px;top:93px;width:80px;text-align:center;font-size:12px;line-height:16px;color:#0e1a66">距离测量</div>
<div class="a tx" style="left:635.5px;top:93px;width:80px;text-align:center;font-size:12px;line-height:16px;color:#0e1a66">测线角度</div>
<div class="a tx" style="left:688.5px;top:93px;width:80px;text-align:center;font-size:12px;line-height:16px;color:#0e1a66">测面角度</div>
<div class="a tx" style="left:752.5px;top:93px;width:80px;text-align:center;font-size:12px;line-height:16px;color:#0e1a66">计算切换</div>
<div class="a tx" style="left:805.5px;top:93px;width:80px;text-align:center;font-size:12px;line-height:16px;color:#0e1a66">重新计算</div>
<div class="a tx" style="left:858.3px;top:93px;width:80px;text-align:center;font-size:12px;line-height:16px;color:#0e1a66">动态指标</div>
<div class="a tx" style="left:911.6px;top:93px;width:80px;text-align:center;font-size:12px;line-height:16px;color:#0e1a66">指标对比</div>
<div class="a tx" style="left:964.5px;top:93px;width:80px;text-align:center;font-size:12px;line-height:16px;color:#0e1a66">总平指标</div>
<div class="a tx" style="left:1017.5px;top:93px;width:80px;text-align:center;font-size:12px;line-height:16px;color:#0e1a66">单体户型</div>
<div class="a tx" style="left:1082.4px;top:93px;width:80px;text-align:center;font-size:12px;line-height:16px;color:#0e1a66">分层面积统计</div>
<div class="a tx" style="left:1147.3px;top:93px;width:80px;text-align:center;font-size:12px;line-height:16px;color:#0e1a66">建筑明晰</div>
<div class="a tx" style="left:1200.5px;top:93px;width:80px;text-align:center;font-size:12px;line-height:16px;color:#0e1a66">单体对比</div>
<svg class="a" style="left:295px;top:112px" width="8" height="5"><path d="M0,0 h7 l-3.5,4z" fill="#15236e"/></svg>
<svg class="a" style="left:0;top:0" width="1352" height="146">
<!-- 失误检测 -->
<path d="M21,68 h17.5 l9,9.5 v11 h-26.5z" fill="none" stroke="#f00000" stroke-width="2.2"/>
<circle cx="34.3" cy="70.5" r="8" fill="none" stroke="#4a90d0" stroke-width="1.3"/>
<path d="M40,77 l8,8" stroke="#333" stroke-width="3.2" stroke-linecap="round"/>
<path d="M41,77.5 l6.5,6.5" stroke="#999" stroke-width="1"/>
<!-- 公共绿地 -->
<path d="M74,75.5 L83.5,74 L88.5,66 L98.8,65 L97.6,80.3 L75.7,86.2z" fill="#2a8a2a" stroke="#102010" stroke-width="1.3" stroke-linejoin="round"/>
<rect x="93" y="69.5" width="3.5" height="5.5" fill="#b8b0b8"/>
<circle cx="78.3" cy="78" r="1.2" fill="#222"/><rect x="77.3" y="79.5" width="2" height="2.5" fill="#d8a030"/>
<!-- 车位复核 -->
<rect x="125.5" y="67.5" width="29" height="19" fill="#c5cad9" stroke="#6f6f6f" stroke-width="1.6"/>
<rect x="127.3" y="69.3" width="25.4" height="15.4" fill="none" stroke="#fff" stroke-width="1.3"/>
<path d="M135,69 v16 M144.5,69 v16" stroke="#fff" stroke-width="1.3"/>
<!-- 面宽检测 -->
<path d="M184,73 L193,64 L202,73 V80 H197 V75 H189 V80 H184z" fill="#e8e8e8" stroke="#222" stroke-width="1"/>
<path d="M182,73.5 L193,62.5 L204,73.5" fill="none" stroke="#1a6ae8" stroke-width="2.2"/>
<rect x="183.5" y="81" width="19" height="6" fill="#e8b830" stroke="#1a3a78" stroke-width="1"/>
<path d="M186,83.5 h14" stroke="#a07010" stroke-dasharray="1 1.5"/>
<!-- 综合检测 -->
<circle cx="243.8" cy="73.8" r="9.3" fill="#c8ccd8" stroke="#2a6ab0" stroke-width="1.4"/>
<circle cx="243.8" cy="73.8" r="5.5" fill="none" stroke="#f07070" stroke-width="1.2"/>
<path d="M243.8,66.5 v3 M243.8,78 v3 M236.5,73.8 h3 M248,73.8 h3" stroke="#f07070" stroke-width="1.2"/>
<path d="M251,82 l9,8.5" stroke="#333" stroke-width="3" stroke-linecap="round"/>
<!-- 建筑间距 -->
<rect x="283.5" y="68" width="8.5" height="21.5" fill="#f8d898" stroke="#606878" stroke-width="1.2"/>
<path d="M285,71 h5 M285,73.5 h5 M285,76 h5 M285,78.5 h5 M285,81 h5 M285,83.5 h5 M285,86 h5" stroke="#fff" stroke-width="0.8"/>
<rect x="305.5" y="77.5" width="9" height="12" fill="#f8d898" stroke="#606878" stroke-width="1.2"/>
<path d="M307,80 h6 M307,82.5 h6 M307,85 h6 M307,87.5 h6" stroke="#fff" stroke-width="0.8"/>
<path d="M293,79 h12" stroke="#1a8ae8" stroke-width="1.3"/><path d="M292.5,79 l3,-2.5 v5z M305.5,79 l-3,-2.5 v5z" fill="#1a8ae8"/>
<rect x="292" y="83.5" width="13.5" height="4.5" fill="#d8a830" stroke="#806020" stroke-width="0.6"/>
<!-- 分类明晰 -->
<path d="M338.5,66 V88.5 H364" fill="none" stroke="#5a1010" stroke-width="1.2"/>
<rect x="341" y="77" width="5" height="11" fill="#f8c020"/>
<rect x="348" y="73" width="5" height="15" fill="#e00000"/>
<rect x="355" y="70" width="5" height="18" fill="#1a6ac0"/>
<!-- 通透率检测 -->
<path d="M401.5,75.5 V86.5 H406 V80 H414 V86.5 H419.5 V75.5" fill="#e0e0e0" stroke="#b05a10" stroke-width="1.1"/>
<path d="M398.5,76 L410.5,64 L422.5,76" fill="none" stroke="#1a4a8a" stroke-width="3"/>
<path d="M398.5,76 L410.5,64 L422.5,76" fill="none" stroke="#8ac8f0" stroke-width="1.6"/>
<circle cx="411.5" cy="78" r="6" fill="none" stroke="#4a7ac0" stroke-width="1.2"/>
<path d="M416,83 l7.5,6.5" stroke="#111" stroke-width="2.8" stroke-linecap="round"/>
<!-- 机场限高检测 -->
<rect x="468" y="62" width="16" height="28" fill="#b8b8b8" stroke="#000" stroke-width="2"/>
<path d="M469,67.5 h14 M469,72.5 h14 M469,77.5 h14 M469,82.5 h14 M476,63 v26" stroke="#777" stroke-width="1.2"/>
<path d="M491,62 h5 v28 h-5" fill="none" stroke="#f00000" stroke-width="1.6"/>
<path d="M488,69 v11.5 M492,69 v11.5 M488,75 h4" stroke="#f00000" stroke-width="1.8"/>
<!-- 地下室检测 -->
<rect x="538" y="63" width="30" height="26" fill="#b0d0e8"/>
<rect x="538" y="63" width="30" height="4" fill="#f8f0c8"/><path d="M538,63.5 h30" stroke="#3a7ac0" stroke-width="1"/>
<rect x="538" y="67" width="30" height="3.5" fill="#111"/>
<path d="M539,70.5 l2,-3.5 M542,70.5 l2,-3.5 M545,70.5 l2,-3.5 M548,70.5 l2,-3.5 M551,70.5 l2,-3.5 M554,70.5 l2,-3.5 M557,70.5 l2,-3.5 M560,70.5 l2,-3.5 M563,70.5 l2,-3.5" stroke="#f0f0f0" stroke-width="0.8"/>
<path d="M543.5,88.5 V72.5 H550 V88.5 M555.5,72.5 V88.5" fill="none" stroke="#111" stroke-width="1.2"/>
<circle cx="557" cy="79.5" r="6" fill="none" stroke="#3a80d0" stroke-width="1.1" stroke-dasharray="2 1"/>
<path d="M561.5,84 l6.5,6" stroke="#444" stroke-width="1.8"/>
<!-- 距离测量 -->
<path d="M610,63 v25 M636,63 v25" stroke="#1a3060" stroke-width="2"/>
<path d="M613,70 h20" stroke="#1a90e8" stroke-width="1.4"/><path d="M611.5,70 l4,-3 v6z M634.5,70 l-4,-3 v6z" fill="#1a90e8"/>
<rect x="611.5" y="81" width="23" height="4.5" fill="#e8b830" stroke="#a07010" stroke-width="0.7"/>
<!-- 测线角度 -->
<path d="M661,86 L673.2,61 L689,76" fill="none" stroke="#1a3a78" stroke-width="2"/>
<path d="M665,89 q12,2 22,-9" fill="none" stroke="#1a80d8" stroke-width="1.6"/>
<path d="M663,88 l4,-3 v5z M688,78 l-4,0 3,4z" fill="#1a80d8"/>
<text x="671" y="78" font-size="8" fill="#5ab0e8" font-family="Liberation Sans">A</text>
<!-- 测面角度 -->
<path d="M714.5,68.5 L730.5,62 V76 L715,82z" fill="#dcdcdc" stroke="#333" stroke-width="0.9"/>
<path d="M715,82 L730.5,76 L743.5,80.5 L726.5,87.5z" fill="#ececec" stroke="#333" stroke-width="0.9"/>
<path d="M733,63.5 q8,1 8,10" fill="none" stroke="#4a80d8" stroke-width="1.2"/>
<path d="M732,63.5 l3,-2 v4z M741,75 l-2,-3 h4z" fill="#4a80d8"/>
<!-- 计算切换 -->
<rect x="779" y="68.5" width="23.5" height="18" rx="1" fill="#a8a8a8" stroke="#222" stroke-width="1.2"/>
<rect x="782" y="71" width="15.5" height="4.5" fill="#2a8ae0" stroke="#1a3a78" stroke-width="0.6"/>
<path d="M783,79 h14 M783,82.5 h14" stroke="#444" stroke-width="1.4" stroke-dasharray="1.5 1"/>
<circle cx="801.5" cy="66" r="5" fill="#f8d848"/><path d="M801.5,61 a5,5 0 0 1 0,10z" fill="#80b0e8"/>
<rect x="799.5" y="70.5" width="4" height="3" fill="#ddd" stroke="#555" stroke-width="0.5"/>
<!-- 重新计算 -->
<rect x="834.5" y="70" width="24" height="18" rx="1" fill="#a8a8a8" stroke="#222" stroke-width="1.2"/>
<rect x="837.5" y="72.5" width="16" height="5" fill="#2a8ae0" stroke="#1a3a78" stroke-width="0.6"/>
<path d="M838.5,81 h14 M838.5,84.5 h14" stroke="#444" stroke-width="1.4" stroke-dasharray="1.5 1"/>
<rect x="843.5" y="63" width="16.5" height="7.5" fill="#fff"/>
<text x="844.3" y="69.8" font-size="7" font-weight="bold" fill="#e00000" font-family="Liberation Sans" textLength="15" lengthAdjust="spacingAndGlyphs">NEW</text>
<!-- grid icons -->
<g id="gridicons">
<rect x="884.5" y="62.5" width="28" height="25" fill="#f6f8fc" stroke="#7d8796"/><rect x="885" y="63" width="27" height="4" fill="#8cb8f4"/><path d="M885,73.0 h27 M885,80.0 h27 M891.5,67 v20 M898.5,67 v20 M905.5,67 v20" stroke="#c9d3e0" stroke-width="1"/>
<rect x="889" y="77" width="5" height="10" fill="#1a5aa0"/><rect x="896" y="75" width="5" height="12" fill="#10c820"/><rect x="903" y="73" width="5" height="14" fill="#f0b000"/>
<path d="M885,77 c2,3 3,3 4.5,0 s3,-5 4.5,-1 s2,6 4,5 s2,-6 3,-8 s2,-2 4.5,4"  fill="none" stroke="#e01818" stroke-width="1.1" stroke-dasharray="1.6 0.6"/>
<rect x="938.5" y="63.5" width="28" height="25" fill="#f6f8fc" stroke="#7d8796"/><rect x="939" y="64" width="27" height="4" fill="#8cb8f4"/><path d="M939,74.0 h27 M939,81.0 h27 M945.5,68 v20 M952.5,68 v20 M959.5,68 v20" stroke="#c9d3e0" stroke-width="1"/>
<rect x="941" y="75" width="5" height="13" fill="#d80000"/><rect x="959" y="75" width="5" height="13" fill="#109010"/>
<text x="947.5" y="86.0" font-size="8.5" font-weight="bold" fill="#111" font-family="Liberation Sans" textLength="10" lengthAdjust="spacingAndGlyphs">VS</text>
<rect x="990.5" y="62.5" width="28" height="25" fill="#f6f8fc" stroke="#7d8796"/><rect x="991" y="63" width="27" height="4" fill="#8cb8f4"/><path d="M991,73.0 h27 M991,80.0 h27 M997.5,67 v20 M1004.5,67 v20 M1011.5,67 v20" stroke="#c9d3e0" stroke-width="1"/>
<rect x="995" y="78" width="4.5" height="9" fill="#1a5aa0"/><rect x="1002" y="75" width="4.5" height="12" fill="#e00000"/><rect x="1009" y="73" width="4.5" height="14" fill="#f0b000"/>
<rect x="1043.5" y="63.5" width="28" height="25" fill="#f6f8fc" stroke="#7d8796"/><rect x="1044" y="64" width="27" height="4" fill="#8cb8f4"/><path d="M1044,74.0 h27 M1044,81.0 h27 M1050.5,68 v20 M1057.5,68 v20 M1064.5,68 v20" stroke="#c9d3e0" stroke-width="1"/>
<path d="M1050,87 V73 h2 v-2 h3 v2 h8 v-2 h3 v2 h2 V87 h-6 v-4 h-6 v4z" fill="#e8c890" stroke="#555" stroke-width="0.9"/>
<rect x="1057" y="73" width="9" height="6" fill="#a8d890" opacity="0.85"/><rect x="1050" y="79" width="8" height="5" fill="#e09090" opacity="0.85"/><rect x="1058" y="79" width="6" height="7" fill="#80a8d0" opacity="0.85"/>
<rect x="1109.5" y="63.5" width="28" height="25" fill="#f6f8fc" stroke="#7d8796"/><rect x="1110" y="64" width="27" height="4" fill="#8cb8f4"/><path d="M1110,74.0 h27 M1110,81.0 h27 M1116.5,68 v20 M1123.5,68 v20 M1130.5,68 v20" stroke="#c9d3e0" stroke-width="1"/>
<path d="M1115,71.0 h2.5 M1122,71.0 h2.5 M1129,71.0 h2.5" stroke="#e00000" stroke-width="2.5"/>
<path d="M1115,77.5 h2.5 M1122,77.5 h2.5 M1129,77.5 h2.5" stroke="#108010" stroke-width="2.5"/>
<path d="M1115,84.0 h2.5 M1122,84.0 h2.5 M1129,84.0 h2.5" stroke="#0000f0" stroke-width="2.5"/>
<rect x="1174.5" y="63.5" width="28" height="25" fill="#f6f8fc" stroke="#7d8796"/><rect x="1175" y="64" width="27" height="4" fill="#8cb8f4"/><path d="M1175,74.0 h27 M1175,81.0 h27 M1181.5,68 v20 M1188.5,68 v20 M1195.5,68 v20" stroke="#c9d3e0" stroke-width="1"/>
<rect x="1177" y="69" width="4" height="4" fill="#e00000"/><rect x="1177" y="76" width="4" height="4" fill="#e8b020"/><rect x="1177" y="82" width="4" height="4.5" fill="#1a78c8"/>
<path d="M1183,71.5 h17 M1183,78.5 h17 M1183,85.5 h17" stroke="#111" stroke-width="1" shape-rendering="crispEdges"/>
</g>
<!-- 单体对比 -->
<path d="M1247,72 V65.5 h4 V71 h3 v-5 h4 v6 V88 h-11z" fill="#e8e0a8" stroke="#333" stroke-width="1"/>
<path d="M1226.5,88 V72 h4 v-4 h4 v4 h8 v-4 h4 v4 h4 V88 h-6 v-5 h-8 v5z" fill="#70d8a0" stroke="#222" stroke-width="1.1"/>
</svg>
</body></html>
